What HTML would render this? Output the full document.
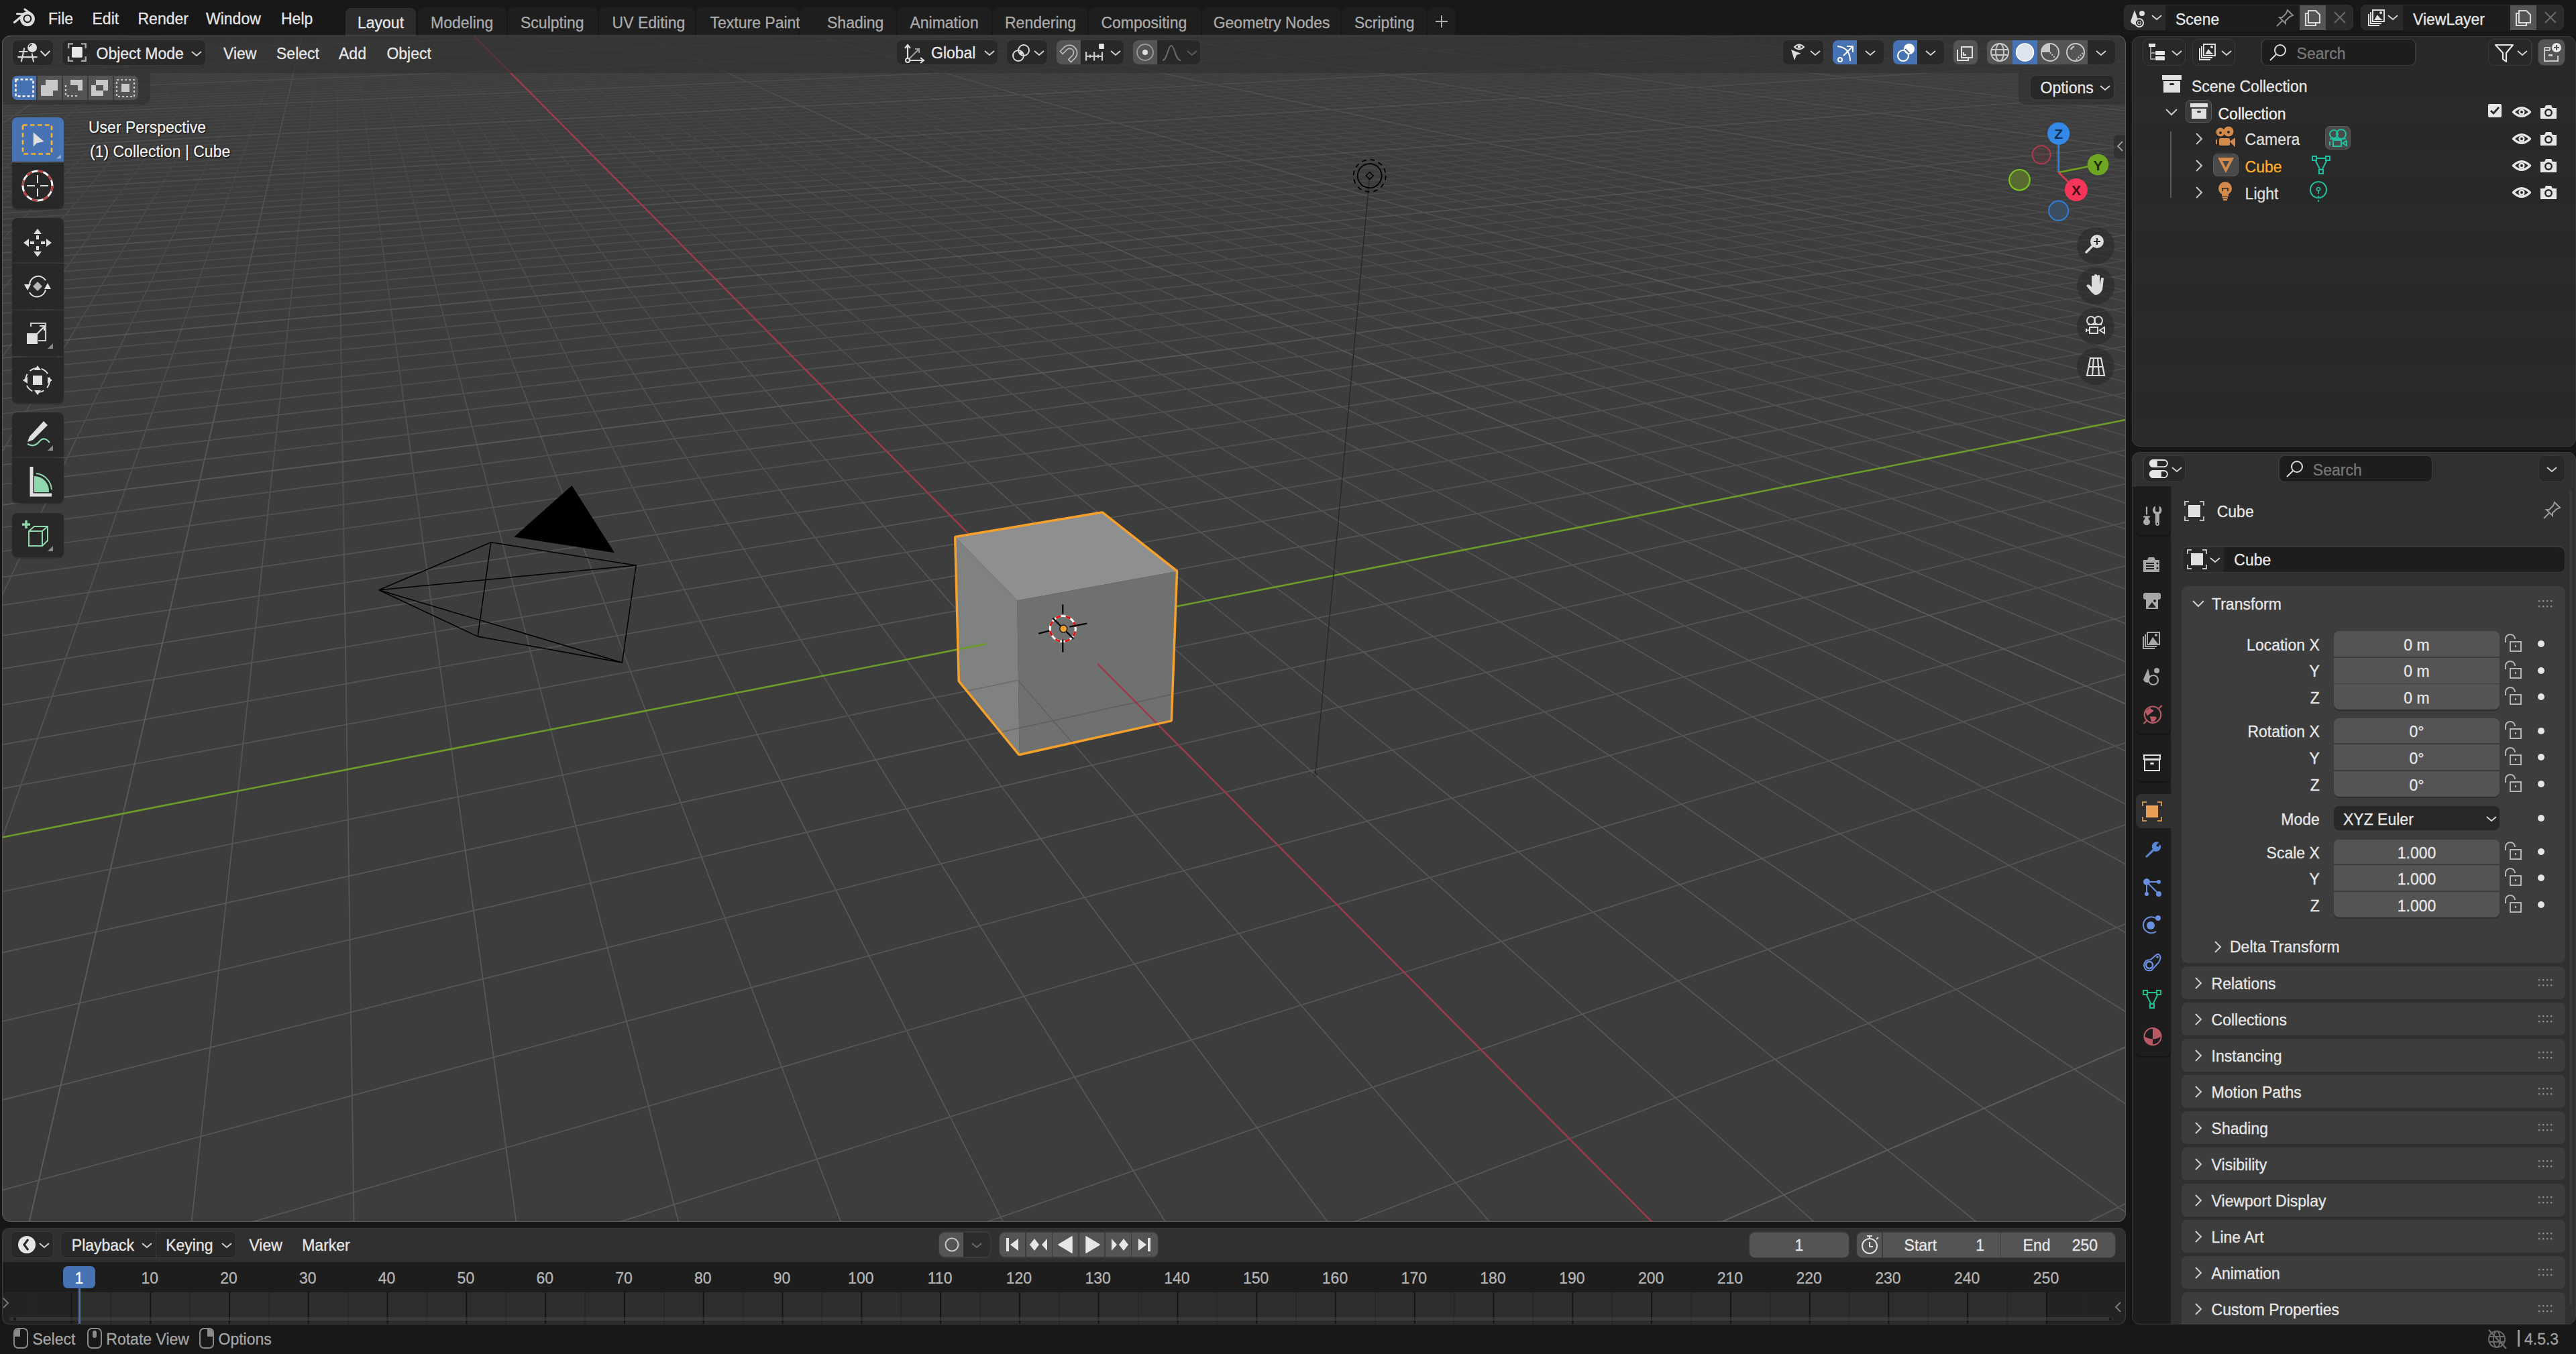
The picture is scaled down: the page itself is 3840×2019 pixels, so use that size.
<!DOCTYPE html>
<html><head><meta charset="utf-8"><style>
html,body{margin:0;padding:0}
body{width:3840px;height:2019px;background:#161616;position:relative;overflow:hidden;font-family:"Liberation Sans",sans-serif;font-size:23px;color:#e6e6e6}
.a{position:absolute}
.t{position:absolute;white-space:nowrap;line-height:1;-webkit-text-stroke:0.3px currentColor}
svg.a{overflow:visible}
</style></head><body>
<svg width="3840" height="2019" viewBox="0 0 3840 2019" style="position:absolute;left:0;top:0"><defs><clipPath id="vpclip"><rect x="3" y="53" width="3166" height="1769" rx="12"/></clipPath><clipPath id="cubeclip"><polygon points="1425.5,802.0 1642.8,765.8 1752.8,852.2 1744.6,1073.4 1519.6,1123.6 1431.0,1015.0" fill="#fff" /></clipPath></defs><g clip-path="url(#vpclip)"><rect x="3" y="53" width="3166" height="1769" fill="#3d3d3d"/><g fill="none" stroke="#575757" stroke-width="1.85"><path d="M-56.6 51.2L1303.0 12.5M-61.5 53.0L1344.8 12.6M-38.5 54.0L1386.7 12.8M-43.2 55.9L1428.6 12.9M-48.1 57.8L1488.2 12.6M-53.0 59.7L1530.2 12.7M-58.0 61.7L1572.2 12.9M-38.9 64.8L1673.5 12.7M-43.9 66.8L1715.6 12.8M-49.0 68.9L1757.8 13.0M35.0 68.3L1816.6 12.6M147.3 66.7L1858.9 12.8M229.9 66.1L1901.1 12.9M339.7 64.5L1959.6 12.6M420.9 63.9L2001.9 12.7M501.6 63.3L2044.2 12.9M687.4 61.2L2144.7 12.6M766.3 60.6L2187.1 12.8M844.7 60.0L2229.7 13.0M897.9 60.2L2287.3 12.6M975.8 59.6L2329.9 12.7M1053.2 59.0L2372.5 12.9M1130.1 58.4L2429.7 12.5M1183.2 58.6L2472.4 12.7M1259.7 58.1L2515.1 12.8M1388.7 57.7L2614.7 12.6M1441.9 57.9L2657.5 12.8M1495.1 58.2L2700.4 12.9M1570.4 57.6L2715.9 14.1M1623.7 57.8L2731.6 15.3M1677.1 58.1L2747.6 16.6M1730.7 58.3L2763.8 17.8M1784.3 58.5L2780.3 19.1M1838.0 58.8L2797.0 20.3M1945.8 59.3L2831.1 23.0M1999.9 59.5L2848.5 24.3M2054.1 59.8L2866.2 25.7M2108.4 60.0L2884.2 27.0M2162.8 60.2L2902.5 28.4M2217.3 60.5L2921.0 29.9M2271.9 60.7L2939.8 31.3M2326.7 61.0L2958.9 32.8M2381.5 61.2L2978.3 34.3M2473.0 62.6L3018.1 37.3M2528.4 62.8L3038.5 38.9M2565.5 64.0L3059.2 40.4M2621.4 64.2L3080.2 42.1M2677.3 64.5L3101.6 43.7M2733.4 64.7L3123.3 45.4M2771.9 65.9L3145.4 47.1M2828.4 66.1L3167.9 48.8M2867.7 67.3L3190.8 50.5M2981.8 67.8L3222.7 54.9M3022.1 69.0L3216.1 58.5M3079.7 69.2L3209.4 62.1M3120.7 70.4L3218.3 65.0M3178.8 70.7L3211.4 68.8M-29.2 50.4L-38.5 54.0M-2.1 49.6L-38.9 64.8M24.9 48.9L-19.3 68.0M51.7 48.1L5.5 69.2M78.2 47.4L35.0 68.3M104.6 46.6L64.3 67.4M130.8 45.9L93.3 66.5M156.8 45.1L118.5 67.6M182.5 44.4L147.3 66.7M233.5 42.9L201.5 67.0M258.8 42.2L229.9 66.1M283.8 41.5L258.1 65.2M308.7 40.8L286.0 64.3M333.3 40.1L312.0 65.4M357.8 39.4L339.7 64.5M382.2 38.7L367.3 63.7M406.3 38.0L393.6 64.8M430.3 37.3L420.9 63.9M477.7 36.0L474.7 64.2M501.2 35.3L501.6 63.3M524.5 34.6L528.3 62.4M547.6 34.0L555.3 63.5M570.6 33.3L581.8 62.7M593.4 32.7L608.1 61.8M616.1 32.0L634.2 60.9M638.6 31.4L661.5 62.0M661.0 30.8L687.4 61.2M705.2 29.5L740.8 61.4M727.1 28.9L766.3 60.6M748.8 28.3L791.6 59.7M770.4 27.6L819.6 60.8M791.9 27.0L844.7 60.0M813.2 26.4L873.0 61.1M834.4 25.8L897.9 60.2M855.4 25.2L922.6 59.4M876.3 24.6L951.2 60.5M917.6 23.5L1000.1 58.8M938.1 22.9L1029.0 59.8M958.4 22.3L1053.2 59.0M978.7 21.7L1077.2 58.2M998.7 21.1L1106.4 59.2M1018.7 20.6L1130.1 58.4M1038.5 20.0L1159.6 59.5M1058.2 19.5L1183.2 58.6M1077.7 18.9L1206.7 57.8M1116.5 17.8L1259.7 58.1M1135.7 17.3L1289.7 59.1M1154.7 16.7L1312.8 58.3M1173.7 16.2L1335.7 57.5M1192.5 15.6L1366.0 58.5M1211.2 15.1L1388.7 57.7M1229.8 14.6L1419.4 58.8M1248.3 14.0L1441.9 57.9M1266.6 13.5L1464.2 57.1M1303.0 12.5L1517.3 57.3M1321.0 12.0L1548.5 58.4M1344.8 12.6L1570.4 57.6M1362.7 12.1L1602.0 58.7M1386.7 12.8L1623.7 57.8M1404.5 12.3L1655.6 58.9M1428.6 12.9L1677.1 58.1M1446.3 12.4L1698.5 57.2M1463.9 11.9L1730.7 58.3M1505.7 12.1L1784.3 58.5M1530.2 12.7L1805.3 57.7M1547.5 12.2L1838.0 58.8M1572.2 12.9L1858.9 57.9M1589.5 12.4L1891.9 59.0M1606.6 11.9L1912.5 58.2M1631.5 12.5L1945.8 59.3M1648.4 12.0L1966.3 58.4M1673.5 12.7L1999.9 59.5M1715.6 12.8L2054.1 59.8M1732.4 12.3L2074.1 58.9M1757.8 13.0L2108.4 60.0M1774.5 12.5L2128.2 59.2M1791.0 12.0L2162.8 60.2M1816.6 12.6L2182.4 59.4M1833.1 12.1L2217.3 60.5M1858.9 12.8L2252.5 61.6M1875.2 12.3L2271.9 60.7M1917.3 12.4L2326.7 61.0M1933.4 11.9L2362.5 62.1M1959.6 12.6L2381.5 61.2M1975.5 12.0L2417.7 62.3M2001.9 12.7L2436.5 61.5M2017.7 12.2L2473.0 62.6M2044.2 12.9L2509.8 63.7M2060.0 12.3L2528.4 62.8M2075.6 11.8L2565.5 64.0M2117.8 12.0L2621.4 64.2M2144.7 12.6L2639.5 63.3M2160.1 12.1L2677.3 64.5M2187.1 12.8L2715.5 65.6M2202.4 12.3L2733.4 64.7M2229.7 13.0L2771.9 65.9M2244.8 12.4L2789.6 65.0M2259.9 11.9L2828.4 66.1M2287.3 12.6L2867.7 67.3M2329.9 12.7L2924.7 67.5M2344.7 12.2L2964.6 68.7M2372.5 12.9L2981.8 67.8M2387.2 12.4L3022.1 69.0M2401.8 11.9L3039.0 68.1M2429.7 12.5L3079.7 69.2M2444.2 12.0L3120.7 70.4M2472.4 12.7L3137.3 69.5M2486.8 12.2L3178.8 70.7M2529.3 12.3L3211.4 68.8M2557.9 13.0L3227.5 67.9M2572.0 12.5L3218.3 65.0M2586.0 12.0L3209.4 62.1M2614.7 12.6L3225.0 61.2M2628.6 12.1L3216.1 58.5M2657.5 12.8L3231.5 57.6M2671.3 12.3L3222.7 54.9M2700.4 12.9L3214.1 52.3" stroke-opacity="0.1"/><path d="M-54.2 71.1L35.0 68.3M-59.5 73.2L147.3 66.7M-64.9 75.4L229.9 66.1M-39.4 76.7L339.7 64.5M-44.7 79.0L420.9 63.9M-50.1 81.3L501.6 63.3M-61.2 86.1L687.4 61.2M-66.9 88.6L766.3 60.6M-40.0 90.0L844.7 60.0M-45.6 92.5L897.9 60.2M-51.3 95.1L975.8 59.6M-57.1 97.8L1053.2 59.0M-63.1 100.5L1130.1 58.4M-69.1 103.3L1183.2 58.6M-40.6 104.9L1259.7 58.1M-52.6 110.7L1388.7 57.7M-58.8 113.7L1441.9 57.9M-65.2 116.8L1495.1 58.2M-71.7 119.9L1570.4 57.6M-41.3 121.7L1623.7 57.8M-47.7 124.9L1677.1 58.1M-54.1 128.3L1730.7 58.3M-60.8 131.7L1784.3 58.5M-67.6 135.2L1838.0 58.8M-42.2 140.8L1945.8 59.3M-48.9 144.5L1999.9 59.5M63.2 143.3L2054.1 59.8M250.1 139.0L2108.4 60.0M395.4 136.2L2162.8 60.2M538.1 133.6L2217.3 60.5M643.7 132.5L2271.9 60.7M782.2 129.9L2326.7 61.0M885.6 128.8L2381.5 61.2M1089.9 126.7L2473.0 62.6M1190.9 125.7L2528.4 62.8M1260.7 126.1L2565.5 64.0M1360.8 125.0L2621.4 64.2M1430.7 125.4L2677.3 64.5M1529.9 124.4L2733.4 64.7M1599.9 124.8L2771.9 65.9M1670.1 125.2L2828.4 66.1M1740.4 125.6L2867.7 67.3M1881.7 126.4L2981.8 67.8M1952.6 126.8L3022.1 69.0M2023.7 127.3L3079.7 69.2M2095.1 127.7L3120.7 70.4M2166.6 128.1L3178.8 70.7M2238.3 128.5L3220.7 71.9M2284.8 130.4L3213.6 76.0M2357.2 130.8L3223.2 79.3M2429.9 131.2L3215.9 83.6M2551.5 133.6L3218.3 91.8M2625.1 134.0L3210.6 96.7M2675.1 136.0L3221.0 100.6M2749.5 136.4L3213.0 105.8M2800.7 138.5L3223.8 109.9M2875.9 138.9L3215.5 115.6M2928.5 140.9L3226.8 120.0M2981.8 143.0L3218.3 126.1M3058.3 143.5L3209.4 132.5M3190.4 146.0L3212.2 144.4M-19.3 68.0L-39.4 76.7M5.5 69.2L-40.0 90.0M35.0 68.3L-40.6 104.9M64.3 67.4L-41.3 121.7M93.3 66.5L-42.2 140.8M118.5 67.6L-15.7 146.7M147.3 66.7L23.9 145.0M201.5 67.0L102.0 141.7M229.9 66.1L140.4 140.1M258.1 65.2L174.4 142.2M286.0 64.3L212.5 140.6M312.0 65.4L250.1 139.0M339.7 64.5L287.4 137.4M367.3 63.7L322.0 139.4M393.6 64.8L358.9 137.8M420.9 63.9L395.4 136.2M474.7 64.2L466.9 136.7M501.6 63.3L502.7 135.1M528.3 62.4L538.1 133.6M555.3 63.5L573.1 132.1M581.8 62.7L609.0 134.0M608.1 61.8L643.7 132.5M634.2 60.9L678.1 131.0M661.5 62.0L712.0 129.5M687.4 61.2L748.6 131.4M740.8 61.4L815.5 128.4M766.3 60.6L852.6 130.3M791.6 59.7L885.6 128.8M819.6 60.8L918.2 127.4M844.7 60.0L955.8 129.2M873.0 61.1L988.1 127.8M897.9 60.2L1020.1 126.3M922.6 59.4L1058.3 128.2M951.2 60.5L1089.9 126.7M1000.1 58.8L1159.9 127.1M1029.0 59.8L1190.9 125.7M1053.2 59.0L1221.5 124.2M1077.2 58.2L1260.7 126.1M1106.4 59.2L1291.1 124.6M1130.1 58.4L1330.8 126.5M1159.6 59.5L1360.8 125.0M1183.2 58.6L1390.5 123.6M1206.7 57.8L1430.7 125.4M1259.7 58.1L1500.8 125.8M1289.7 59.1L1529.9 124.4M1312.8 58.3L1571.1 126.3M1335.7 57.5L1599.9 124.8M1366.0 58.5L1628.3 123.4M1388.7 57.7L1670.1 125.2M1419.4 58.8L1698.2 123.8M1441.9 57.9L1740.4 125.6M1464.2 57.1L1768.2 124.2M1517.3 57.3L1838.4 124.6M1548.5 58.4L1881.7 126.4M1570.4 57.6L1908.8 125.0M1602.0 58.7L1952.6 126.8M1623.7 57.8L1979.4 125.4M1655.6 58.9L2023.7 127.3M1677.1 58.1L2050.2 125.8M1698.5 57.2L2095.1 127.7M1730.7 58.3L2140.5 129.6M1784.3 58.5L2212.5 130.0M1805.3 57.7L2238.3 128.5M1838.0 58.8L2284.8 130.4M1858.9 57.9L2310.2 128.9M1891.9 59.0L2357.2 130.8M1912.5 58.2L2404.9 132.8M1945.8 59.3L2429.9 131.2M1966.3 58.4L2478.1 133.2M1999.9 59.5L2502.7 131.7M2054.1 59.8L2600.9 135.6M2074.1 58.9L2625.1 134.0M2108.4 60.0L2675.1 136.0M2128.2 59.2L2725.8 138.0M2162.8 60.2L2749.5 136.4M2182.4 59.4L2800.7 138.5M2217.3 60.5L2852.7 140.5M2252.5 61.6L2875.9 138.9M2271.9 60.7L2928.5 140.9M2326.7 61.0L3004.4 141.4M2362.5 62.1L3058.3 143.5M2381.5 61.2L3113.0 145.6M2417.7 62.3L3168.4 147.7M2436.5 61.5L3190.4 146.0M2473.0 62.6L3212.2 144.4M2509.8 63.7L3233.7 142.8M2528.4 62.8L3221.3 137.5M2565.5 64.0L3209.4 132.5M2621.4 64.2L3218.3 126.1M2639.5 63.3L3238.5 124.7M2677.3 64.5L3226.8 120.0M2715.5 65.6L3215.5 115.6M2733.4 64.7L3235.0 114.2M2771.9 65.9L3223.8 109.9M2789.6 65.0L3213.0 105.8M2828.4 66.1L3231.7 104.5M2867.7 67.3L3221.0 100.6M2924.7 67.5L3228.7 95.5M2964.6 68.7L3218.3 91.8M2981.8 67.8L3236.1 90.7M3022.1 69.0L3225.8 87.1M3039.0 68.1L3215.9 83.6M3079.7 69.2L3233.0 82.6M3120.7 70.4L3223.2 79.3M3137.3 69.5L3213.6 76.0M3178.8 70.7L3230.2 75.0" stroke-opacity="0.19"/><path d="M-55.9 148.3L63.2 143.3M-63.0 152.3L250.1 139.0M-70.3 156.3L395.4 136.2M-77.8 160.4L538.1 133.6M-43.1 162.8L643.7 132.5M-50.4 167.0L782.2 129.9M-57.9 171.5L885.6 128.8M-73.5 180.7L1089.9 126.7M-81.6 185.4L1190.9 125.7M-44.2 188.2L1260.7 126.1M-52.1 193.2L1360.8 125.0M-60.2 198.4L1430.7 125.4M-68.6 203.7L1529.9 124.4M-77.2 209.2L1599.9 124.8M-37.1 212.3L1670.1 125.2M-45.4 218.1L1740.4 125.6M136.4 219.5L1881.7 126.4M368.6 212.6L1952.6 126.8M592.2 205.9L2023.7 127.3M766.2 201.8L2095.1 127.7M895.5 200.1L2166.6 128.1M1023.6 198.5L2238.3 128.5M1150.4 196.8L2284.8 130.4M1276.1 195.2L2357.2 130.8M1400.5 193.6L2429.9 131.2M1575.0 194.8L2551.5 133.6M1697.8 193.2L2625.1 134.0M1785.3 193.8L2675.1 136.0M1873.0 194.4L2749.5 136.4M1961.1 195.1L2800.7 138.5M2016.3 198.0L2875.9 138.9M2105.5 198.6L2928.5 140.9M2195.0 199.2L2981.8 143.0M2284.8 199.9L3058.3 143.5M2434.4 203.5L3190.4 146.0M2494.9 206.5L3224.6 149.9M2587.0 207.2L3215.1 157.4M2649.5 210.3L3228.2 163.3M2742.8 211.0L3218.3 171.5M2807.3 214.1L3232.1 178.0M2872.8 217.4L3221.9 187.0M2968.3 218.1L3211.1 196.4M3036.0 221.4L3225.7 204.0M3202.6 225.4L3230.0 222.8M-15.7 146.7L-43.1 162.8M23.9 145.0L-44.2 188.2M102.0 141.7L-12.1 227.4M140.4 140.1L38.1 224.7M174.4 142.2L87.6 222.1M212.5 140.6L136.4 219.5M250.1 139.0L184.5 216.9M287.4 137.4L232.0 214.4M322.0 139.4L275.3 217.6M358.9 137.8L322.3 215.1M395.4 136.2L368.6 212.6M466.9 136.7L459.3 207.7M502.7 135.1L503.8 210.8M538.1 133.6L548.3 208.3M573.1 132.1L592.2 205.9M609.0 134.0L635.6 203.5M643.7 132.5L681.1 206.6M678.1 131.0L723.9 204.2M712.0 129.5L766.2 201.8M748.6 131.4L807.9 199.5M815.5 128.4L895.5 200.1M852.6 130.3L936.2 197.8M885.6 128.8L983.4 200.8M918.2 127.4L1023.6 198.5M955.8 129.2L1063.2 196.2M988.1 127.8L1111.3 199.1M1020.1 126.3L1150.4 196.8M1058.3 128.2L1189.1 194.6M1089.9 126.7L1237.9 197.5M1159.9 127.1L1313.7 192.9M1190.9 125.7L1363.4 195.8M1221.5 124.2L1400.5 193.6M1260.7 126.1L1451.0 196.4M1291.1 124.6L1487.6 194.2M1330.8 126.5L1523.8 192.0M1360.8 125.0L1575.0 194.8M1390.5 123.6L1610.6 192.6M1430.7 125.4L1662.6 195.4M1500.8 125.8L1750.6 196.1M1529.9 124.4L1785.3 193.8M1571.1 126.3L1838.9 196.7M1599.9 124.8L1873.0 194.4M1628.3 123.4L1927.5 197.3M1670.1 125.2L1961.1 195.1M1698.2 123.8L2016.3 198.0M1740.4 125.6L2049.4 195.7M1768.2 124.2L2105.5 198.6M1838.4 124.6L2195.0 199.2M1881.7 126.4L2252.8 202.2M1908.8 125.0L2284.8 199.9M1952.6 126.8L2343.4 202.8M1979.4 125.4L2374.8 200.5M2023.7 127.3L2434.4 203.5M2050.2 125.8L2494.9 206.5M2095.1 127.7L2525.6 204.1M2140.5 129.6L2587.0 207.2M2212.5 130.0L2713.0 213.5M2238.3 128.5L2742.8 211.0M2284.8 130.4L2807.3 214.1M2310.2 128.9L2872.8 217.4M2357.2 130.8L2901.8 214.8M2404.9 132.8L2968.3 218.1M2429.9 131.2L3036.0 221.4M2478.1 133.2L3104.8 224.7M2502.7 131.7L3174.9 228.1M2600.9 135.6L3230.0 222.8M2625.1 134.0L3214.5 214.4M2675.1 136.0L3241.0 211.9M2725.8 138.0L3225.7 204.0M2749.5 136.4L3211.1 196.4M2800.7 138.5L3236.3 194.2M2852.7 140.5L3221.9 187.0M2875.9 138.9L3246.4 184.8M2928.5 140.9L3232.1 178.0M3004.4 141.4L3241.7 169.6M3058.3 143.5L3228.2 163.3M3113.0 145.6L3215.1 157.4M3168.4 147.7L3237.5 155.6M3190.4 146.0L3224.6 149.9" stroke-opacity="0.28"/><path d="M-62.9 230.1L136.4 219.5M-72.1 236.4L368.6 212.6M-81.6 243.0L592.2 205.9M-37.8 246.7L766.2 201.8M-46.9 253.6L895.5 200.1M-56.4 260.7L1023.6 198.5M-66.2 268.1L1150.4 196.8M-76.4 275.7L1276.1 195.2M-86.9 283.6L1400.5 193.6M-48.8 296.6L1575.0 194.8M-59.3 305.3L1697.8 193.2M52.6 306.3L1785.3 193.8M395.3 292.2L1873.0 194.4M665.7 282.4L1961.1 195.1M874.8 276.4L2016.3 198.0M1030.3 273.9L2105.5 198.6M1230.4 268.1L2195.0 199.2M1335.8 269.0L2284.8 199.9M1591.5 267.5L2434.4 203.5M1697.4 268.4L2494.9 206.5M1803.8 269.4L2587.0 207.2M1910.6 270.3L2649.5 210.3M2017.9 271.2L2742.8 211.0M2125.5 272.1L2807.3 214.1M2194.7 276.4L2872.8 217.4M2304.1 277.4L2968.3 218.1M2413.9 278.3L3036.0 221.4M2561.5 287.3L3202.6 225.4M2674.4 288.3L3218.3 234.4M2751.9 292.9L3234.8 243.7M2831.0 297.7L3222.6 256.6M2947.1 298.7L3209.6 270.3M3029.3 303.6L3227.3 281.5M3113.2 308.5L3213.7 297.0M3199.0 313.6L3232.7 309.6M-12.1 227.4L-37.8 246.7M38.1 224.7L-38.6 288.2M87.6 222.1L-8.3 310.3M136.4 219.5L52.6 306.3M184.5 216.9L112.5 302.5M232.0 214.4L171.3 298.6M275.3 217.6L229.2 294.9M322.3 215.1L282.1 299.7M368.6 212.6L339.2 295.9M459.3 207.7L450.6 288.5M503.8 210.8L504.9 284.9M548.3 208.3L559.4 289.5M592.2 205.9L613.0 285.9M635.6 203.5L665.7 282.4M681.1 206.6L717.5 278.9M723.9 204.2L768.5 275.4M766.2 201.8L824.6 279.8M807.9 199.5L874.8 276.4M895.5 200.1L981.6 277.3M936.2 197.8L1030.3 273.9M983.4 200.8L1078.3 270.5M1023.6 198.5L1125.5 267.2M1063.2 196.2L1183.9 271.5M1111.3 199.1L1230.4 268.1M1150.4 196.8L1290.1 272.4M1189.1 194.6L1335.8 269.0M1237.9 197.5L1380.9 265.8M1313.7 192.9L1485.9 266.6M1363.4 195.8L1547.9 270.9M1400.5 193.6L1591.5 267.5M1451.0 196.4L1634.4 264.3M1487.6 194.2L1697.4 268.4M1523.8 192.0L1739.6 265.2M1575.0 194.8L1803.8 269.4M1610.6 192.6L1845.2 266.1M1662.6 195.4L1910.6 270.3M1750.6 196.1L2017.9 271.2M1785.3 193.8L2085.8 275.5M1838.9 196.7L2125.5 272.1M1873.0 194.4L2194.7 276.4M1927.5 197.3L2233.7 273.0M1961.1 195.1L2304.1 277.4M2016.3 198.0L2375.9 281.8M2049.4 195.7L2413.9 278.3M2105.5 198.6L2487.0 282.7M2195.0 199.2L2598.5 283.7M2252.8 202.2L2674.4 288.3M2284.8 199.9L2751.9 292.9M2343.4 202.8L2831.0 297.7M2374.8 200.5L2911.8 302.5M2434.4 203.5L2947.1 298.7M2494.9 206.5L3029.3 303.6M2525.6 204.1L3113.2 308.5M2587.0 207.2L3199.0 313.6M2713.0 213.5L3213.7 297.0M2742.8 211.0L3246.1 293.3M2807.3 214.1L3227.3 281.5M2872.8 217.4L3209.6 270.3M2901.8 214.8L3240.1 267.0M2968.3 218.1L3222.6 256.6M3036.0 221.4L3252.0 253.5M3104.8 224.7L3234.8 243.7M3174.9 228.1L3218.3 234.4" stroke-opacity="0.38"/><path d="M-70.2 314.3L52.6 306.3M-81.6 323.7L395.3 292.2M-93.4 333.5L665.7 282.4M-39.7 339.2L874.8 276.4M-51.0 349.6L1030.3 273.9M-62.8 360.5L1230.4 268.1M-75.2 371.9L1335.8 269.0M-101.6 396.2L1591.5 267.5M-41.0 403.4L1697.4 268.4M441.0 377.5L1803.8 269.4M760.2 363.6L1910.6 270.3M1006.0 355.2L2017.9 271.2M1188.7 351.7L2125.5 272.1M1368.9 348.3L2194.7 276.4M1546.6 345.0L2304.1 277.4M1671.9 346.2L2413.9 278.3M1924.2 348.7L2561.5 287.3M2051.3 350.0L2674.4 288.3M2132.3 356.0L2751.9 292.9M2261.8 357.4L2831.0 297.7M2346.5 363.6L2947.1 298.7M2478.4 364.9L3029.3 303.6M2567.0 371.3L3113.2 308.5M2657.9 377.9L3199.0 313.6M2794.2 379.3L3218.3 327.2M2986.7 393.0L3223.7 361.8M3086.7 400.1L3245.8 378.3M3189.4 407.4L3229.8 401.6M-8.3 310.3L-39.7 339.2M52.6 306.3L-41.0 403.4M112.5 302.5L32.3 397.7M171.3 298.6L104.1 392.2M229.2 294.9L174.4 386.7M282.1 299.7L237.5 393.7M339.2 295.9L306.7 388.2M450.6 288.5L441.0 377.5M504.9 284.9L506.2 372.3M559.4 289.5L570.1 367.3M613.0 285.9L632.8 362.3M665.7 282.4L698.6 368.6M717.5 278.9L760.2 363.6M768.5 275.4L820.7 358.7M824.6 279.8L880.0 353.9M874.8 276.4L947.7 360.0M981.6 277.3L1063.1 350.5M1030.3 273.9L1132.5 356.5M1078.3 270.5L1188.7 351.7M1125.5 267.2L1243.8 347.1M1183.9 271.5L1314.8 353.0M1230.4 268.1L1368.9 348.3M1290.1 272.4L1421.9 343.7M1335.8 269.0L1494.6 349.6M1380.9 265.8L1546.6 345.0M1485.9 266.6L1671.9 346.2M1547.9 270.9L1747.8 352.2M1591.5 267.5L1797.7 347.5M1634.4 264.3L1875.4 353.4M1697.4 268.4L1924.2 348.7M1739.6 265.2L2003.5 354.7M1803.8 269.4L2051.3 350.0M1845.2 266.1L2132.3 356.0M1910.6 270.3L2179.1 351.3M2017.9 271.2L2346.5 363.6M2085.8 275.5L2391.9 358.7M2125.5 272.1L2478.4 364.9M2194.7 276.4L2567.0 371.3M2233.7 273.0L2657.9 377.9M2304.1 277.4L2701.4 372.7M2375.9 281.8L2794.2 379.3M2413.9 278.3L2889.2 386.1M2487.0 282.7L2986.7 393.0M2598.5 283.7L3189.4 407.4M2674.4 288.3L3229.8 401.6M2751.9 292.9L3269.5 396.0M2831.0 297.7L3245.8 378.3M2911.8 302.5L3223.7 361.8M2947.1 298.7L3260.5 356.9M3029.3 303.6L3238.8 341.6M3113.2 308.5L3218.3 327.2M3199.0 313.6L3252.8 323.0" stroke-opacity="0.48"/><path d="M-53.8 416.8L441.0 377.5M-67.4 430.8L760.2 363.6M-81.6 445.5L1006.0 355.2M-96.5 461.0L1188.7 351.7M-112.2 477.3L1368.9 348.3M-42.7 486.8L1546.6 345.0M-57.6 504.5L1671.9 346.2M877.6 449.7L1924.2 348.7M1161.0 438.2L2051.3 350.0M1371.9 433.5L2132.3 356.0M1519.0 435.3L2261.8 357.4M1666.8 437.0L2346.5 363.6M1815.5 438.8L2478.4 364.9M1965.1 440.5L2567.0 371.3M2115.5 442.3L2657.9 377.9M2212.4 450.8L2794.2 379.3M2468.4 461.3L2986.7 393.0M2625.5 463.2L3086.7 400.1M2733.3 472.3L3189.4 407.4M2844.2 481.6L3212.3 427.1M2958.5 491.2L3237.0 448.2M3076.3 501.1L3218.3 478.2M3197.7 511.3L3245.5 503.3M32.3 397.7L-42.7 486.8M104.1 392.2L29.0 496.6M174.4 386.7L113.4 488.8M237.5 393.7L187.7 498.7M306.7 388.2L270.5 490.9M441.0 377.5L430.4 475.9M506.2 372.3L507.6 468.6M570.1 367.3L583.0 461.5M632.8 362.3L656.8 454.6M698.6 368.6L734.8 463.4M760.2 363.6L807.0 456.5M820.7 358.7L877.6 449.7M880.0 353.9L946.7 443.0M947.7 360.0L1027.3 451.5M1063.1 350.5L1161.0 438.2M1132.5 356.5L1225.7 431.8M1188.7 351.7L1308.7 440.0M1243.8 347.1L1371.9 433.5M1314.8 353.0L1457.1 441.8M1368.9 348.3L1519.0 435.3M1421.9 343.7L1579.4 428.9M1494.6 349.6L1666.8 437.0M1546.6 345.0L1725.9 430.6M1671.9 346.2L1873.2 432.3M1747.8 352.2L1965.1 440.5M1797.7 347.5L2059.6 448.9M1875.4 353.4L2115.5 442.3M1924.2 348.7L2212.4 450.8M2003.5 354.7L2266.8 444.1M2051.3 350.0L2366.2 452.6M2132.3 356.0L2468.4 461.3M2179.1 351.3L2573.5 470.3M2346.5 363.6L2733.3 472.3M2391.9 358.7L2844.2 481.6M2478.4 364.9L2958.5 491.2M2567.0 371.3L3076.3 501.1M2657.9 377.9L3197.7 511.3M2701.4 372.7L3245.5 503.3M2794.2 379.3L3218.3 478.2M2889.2 386.1L3263.5 470.9M2986.7 393.0L3237.0 448.2M3189.4 407.4L3254.0 420.9" stroke-opacity="0.57"/><path d="M-90.0 543.0L877.6 449.7M-107.6 564.0L1161.0 438.2M-126.4 586.2L1371.9 433.5M-44.9 599.3L1519.0 435.3M-62.6 623.9L1666.8 437.0M-81.5 650.1L1815.5 438.8M-101.6 678.1L8.0 665.5M1025.7 548.5L1965.1 440.5M1351.0 533.1L2115.5 442.3M1522.9 535.4L2212.4 450.8M1870.1 540.2L2468.4 461.3M2045.5 542.6L2625.5 463.2M2222.0 545.0L2733.3 472.3M2337.7 556.7L2844.2 481.6M2457.2 568.7L2958.5 491.2M2580.8 581.1L3076.3 501.1M2708.7 594.0L3197.7 511.3M2841.1 607.3L3225.5 539.2M2918.0 632.4L3255.7 569.4M29.0 496.6L-44.9 599.3M113.4 488.8L8.0 665.5M187.7 498.7L114.3 653.3M270.5 490.9L226.5 615.8M430.4 475.9L417.7 594.5M507.6 468.6L509.3 584.3M583.0 461.5L598.5 574.3M656.8 454.6L685.3 564.7M734.8 463.4L769.8 555.3M807.0 456.5L852.2 546.1M877.6 449.7L945.3 557.8M946.7 443.0L1025.7 548.5M1027.3 451.5L1104.0 539.5M1161.0 438.2L1276.7 541.9M1225.7 431.8L1351.0 533.1M1308.7 440.0L1450.5 544.3M1371.9 433.5L1522.9 535.4M1457.1 441.8L1593.5 526.8M1519.0 435.3L1696.0 537.8M1579.4 428.9L1764.6 529.1M1666.8 437.0L1870.1 540.2M1725.9 430.6L1936.8 531.4M1873.2 432.3L2157.8 554.2M1965.1 440.5L2222.0 545.0M2059.6 448.9L2337.7 556.7M2115.5 442.3L2457.2 568.7M2212.4 450.8L2580.8 581.1M2266.8 444.1L2708.7 594.0M2366.2 452.6L2841.1 607.3M2468.4 461.3L3061.2 647.1M2573.5 470.3L3209.9 662.4M2733.3 472.3L3234.2 613.1M2844.2 481.6L3288.6 602.4M2958.5 491.2L3255.7 569.4M3076.3 501.1L3225.5 539.2M3197.7 511.3L3274.9 530.4" stroke-opacity="0.66"/><path d="M8.0 665.5L1025.7 548.5M-123.3 708.2L1351.0 533.1M-146.5 740.5L1522.9 535.4M-69.9 796.0L1870.1 540.2M-93.4 835.3L2045.5 542.6M-118.9 878.1L2222.0 545.0M-146.7 924.7L263.9 863.8M1062.9 745.5L2337.7 556.7M1475.6 720.3L2457.2 568.7M1695.0 724.1L2580.8 581.1M1916.1 727.9L2708.7 594.0M2056.2 746.5L2841.1 607.3M2202.2 765.9L2918.0 632.4M2513.9 807.2L3209.9 662.4M2680.5 829.3L3244.9 704.7M2854.8 852.4L3218.3 766.9M2958.2 896.6L3258.6 821.0M3151.7 923.1L3229.2 902.1M8.0 665.5L-48.2 759.6M114.3 653.3L-27.7 952.6M226.5 615.8L132.3 883.3M417.7 594.5L390.7 845.1M509.3 584.3L512.9 827.0M598.5 574.3L630.7 809.5M685.3 564.7L744.5 792.7M769.8 555.3L854.3 776.4M852.2 546.1L960.3 760.7M945.3 557.8L1062.9 745.5M1025.7 548.5L1162.1 730.8M1104.0 539.5L1286.8 749.5M1276.7 541.9L1475.6 720.3M1351.0 533.1L1605.3 738.6M1450.5 544.3L1695.0 724.1M1522.9 535.4L1829.8 742.5M1593.5 526.8L1916.1 727.9M1696.0 537.8L2056.2 746.5M1764.6 529.1L2202.2 765.9M1870.1 540.2L2354.7 786.1M1936.8 531.4L2513.9 807.2M2157.8 554.2L2854.8 852.4M2222.0 545.0L3151.7 923.1M2337.7 556.7L3229.2 902.1M2457.2 568.7L3303.9 881.9M2580.8 581.1L3258.6 821.0M2708.7 594.0L3218.3 766.9M2841.1 607.3L3283.8 751.5M3061.2 647.1L3244.9 704.7" stroke-opacity="0.76"/><path d="M263.9 863.8L1062.9 745.5M-177.2 975.7L1475.6 720.3M-53.2 1006.3L1695.0 724.1M-81.3 1065.5L1916.1 727.9M-112.4 1131.0L2056.2 746.5M-147.1 1204.0L2202.2 765.9M-229.6 1378.0L2513.9 807.2M1440.8 1103.0L2680.5 829.3M1756.3 1110.8L2854.8 852.4M2075.7 1118.7L2958.2 896.6M2284.4 1157.7L3151.7 923.1M2506.3 1199.1L3276.5 973.8M2742.7 1243.2L3243.9 1083.7M2881.6 1329.8L3301.1 1183.4M3154.9 1383.0L3264.6 1340.6M-27.7 952.6L-53.2 1006.3M132.3 883.3L-61.9 1434.8M390.7 845.1L346.3 1258.2M512.9 827.0L518.8 1222.3M630.7 809.5L682.7 1188.2M744.5 792.7L838.7 1155.8M854.3 776.4L987.3 1124.8M960.3 760.7L1129.0 1095.3M1062.9 745.5L1305.5 1132.9M1162.1 730.8L1440.8 1103.0M1286.8 749.5L1569.9 1074.5M1475.6 720.3L1954.0 1149.3M1605.3 738.6L2075.7 1118.7M1695.0 724.1L2284.4 1157.7M1829.8 742.5L2506.3 1199.1M1916.1 727.9L2881.6 1329.8M2056.2 746.5L3336.9 1488.4M2202.2 765.9L3264.6 1340.6M2354.7 786.1L3368.4 1300.5M2513.9 807.2L3301.1 1183.4M2854.8 852.4L3330.7 1056.1M3151.7 923.1L3276.5 973.8" stroke-opacity="0.86"/><path d="M-61.9 1434.8L1440.8 1103.0M-101.8 1547.8L1756.3 1110.8M-147.6 1678.1L2075.7 1118.7M-201.1 1830.0L2284.4 1157.7M19.7 1926.3L2506.3 1199.1M776.0 1869.1L2742.7 1243.2M1279.0 1889.1L2881.6 1329.8M1792.0 1909.6L3154.9 1383.0M3009.3 1873.1L3296.2 1732.1M346.3 1258.2L263.1 2032.3M518.8 1222.3L529.5 1947.5M682.7 1188.2L776.0 1869.1M838.7 1155.8L1049.7 1969.2M987.3 1124.8L1279.0 1889.1M1129.0 1095.3L1580.6 1991.3M1305.5 1132.9L1792.0 1909.6M1440.8 1103.0L2122.6 2013.9M1569.9 1074.5L2315.3 1930.5M1954.0 1149.3L2849.1 1951.9M2075.7 1118.7L3009.3 1873.1M2284.4 1157.7L3393.9 1973.6M2506.3 1199.1L3296.2 1732.1M2881.6 1329.8L3218.4 1539.8" stroke-opacity="0.95"/></g><g fill="none" stroke="#5e5e5e" stroke-width="2.0"><path d="M-63.1 63.7L1631.5 12.5M1309.4 38.7L2102.3 12.5M1835.2 39.3L2557.9 13.0M2240.1 44.9L2813.9 21.6M2599.5 54.0L2998.1 35.8M2941.8 66.6L3214.1 52.3M208.1 43.7L172.9 67.9M454.1 36.7L449.4 57.2M897.0 24.0L940.1 43.5M1097.2 18.3L1170.3 39.6M1284.9 13.0L1398.8 37.5M1488.2 12.6L1640.3 38.5M1690.4 12.2L1884.1 39.5M1901.1 12.9L2157.3 43.8M2102.3 12.5L2459.0 50.0M2302.3 12.1L2863.2 64.3M2515.1 12.8L3220.7 71.9" stroke-opacity="0.28"/><path d="M-55.6 83.7L1309.4 38.7M-46.6 107.8L1835.2 39.3M-74.5 138.8L2240.1 44.9M-65.6 176.0L2599.5 54.0M1669.2 133.5L2941.8 66.6M2271.3 145.9L3225.8 87.1M2801.0 168.8L3221.3 137.5M172.9 67.9L-6.1 191.0M449.4 57.2L424.4 165.9M940.1 43.5L1151.8 139.1M1170.3 39.6L1495.0 134.1M1398.8 37.5L1858.9 136.3M1640.3 38.5L2271.3 145.9M1884.1 39.5L2801.0 168.8M2157.3 43.8L3218.3 171.5M2459.0 50.0L3230.1 131.0M2863.2 64.3L3210.6 96.7" stroke-opacity="0.38"/><path d="M-54.0 224.0L1669.2 133.5M-38.6 288.2L2271.3 145.9M1817.0 242.0L2801.0 168.8M2560.8 275.8L3214.5 214.4M-6.1 191.0L-37.1 212.3M424.4 165.9L395.3 292.2M1151.8 139.1L1379.1 241.7M1495.0 134.1L1878.4 245.7M1858.9 136.3L2488.1 271.5M2271.3 145.9L3232.7 309.6M2801.0 168.8L3246.2 231.6" stroke-opacity="0.48"/><path d="M-88.1 383.8L1817.0 242.0M1592.2 366.8L2560.8 275.8M2619.1 420.4L3238.8 341.6M395.3 292.2L362.3 436.0M1379.1 241.7L1645.1 361.8M1878.4 245.7L2382.6 392.5M2488.1 271.5L3212.3 427.1" stroke-opacity="0.57"/><path d="M-73.3 523.2L1592.2 366.8M1831.5 520.6L2619.1 420.4M362.3 436.0L323.4 605.0M1645.1 361.8L2001.8 522.8M2382.6 392.5L3268.1 650.3" stroke-opacity="0.66"/><path d="M-48.2 759.6L1831.5 520.6M323.4 605.0L263.9 863.8M2001.8 522.8L2680.5 829.3" stroke-opacity="0.76"/><path d="M263.9 863.8L143.1 1389.6M2680.5 829.3L3243.9 1083.7" stroke-opacity="0.86"/><path d="M2315.3 1930.5L3218.4 1539.8M143.1 1389.6L19.7 1926.3" stroke-opacity="0.95"/></g><path d="M683.2 30.1 L683.9 30.9 L684.6 31.6 L685.3 32.3 L686.1 33.1 L686.8 33.8 L687.6 34.6 L688.3 35.3 L689.1 36.1 L689.8 36.9 L690.6 37.6 L691.4 38.4 L692.2 39.2 L693.0 40.0 L693.8 40.8 L694.6 41.6 L695.4 42.4 L696.2 43.3 L697.0 44.1 L697.8 44.9 L698.7 45.8 L699.5 46.6 L700.4 47.5 L701.2 48.4 L702.1 49.2 L703.0 50.1 L703.9 51.0 L704.8 51.9 L705.7 52.8 L706.6 53.7 L707.5 54.6 L708.4 55.6 L709.3 56.5 L710.3 57.4 L711.2 58.4 L712.2 59.4 L713.1 60.3 L714.1 61.3 L715.1 62.3 L716.1 63.3 L717.1 64.3 L718.1 65.3 L719.1 66.3 L720.1 67.4 L721.2 68.4 L722.2 69.5 L723.3 70.5 L724.3 71.6 L725.4 72.7 L726.5 73.8 L727.6 74.9 L728.7 76.0 L729.8 77.1 L731.0 78.3 L732.1 79.4 L733.2 80.6 L734.4 81.8 L735.6 82.9 L736.8 84.1 L738.0 85.3 L739.2 86.6 L740.4 87.8 L741.6 89.0 L742.9 90.3 L744.2 91.6 L745.4 92.8 L746.7 94.1 L748.0 95.5 L749.3 96.8 L750.7 98.1 L752.0 99.5 L753.4 100.8 L754.7 102.2 L756.1 103.6 L757.5 105.0 L758.9 106.4 L760.4 107.9 L761.8 109.3 L763.3 110.8 L764.8 112.3 L766.3 113.8 L767.8 115.3 L769.3 116.9 L770.9 118.5 L772.4 120.0 L774.0 121.6 L775.6 123.2 L777.2 124.9 L778.9 126.5 L780.5 128.2 L782.2 129.9 L783.9 131.6 L785.6 133.3 L787.4 135.1 L789.1 136.9 L790.9 138.7 L792.7 140.5 L794.6 142.3 L796.4 144.2 L798.3 146.1 L800.2 148.0 L802.1 149.9 L804.1 151.9 L806.0 153.9 L808.0 155.9 L810.1 157.9 L812.1 160.0 L814.2 162.1 L816.3 164.2 L818.4 166.4 L820.6 168.6 L822.8 170.8 L825.0 173.0 L827.3 175.3 L829.6 177.6 L831.9 179.9 L834.2 182.3 L836.6 184.7 L839.0 187.1 L841.5 189.6 L844.0 192.1 L846.5 194.6 L849.1 197.2 L851.7 199.8 L854.3 202.5 L857.0 205.2 L859.7 207.9 L862.5 210.7 L865.3 213.5 L868.1 216.4 L871.0 219.3 L873.9 222.3 L876.9 225.3 L880.0 228.3 L883.0 231.4 L886.2 234.6 L889.3 237.8 L892.6 241.0 L895.9 244.3 L899.2 247.7 L902.6 251.1 L906.1 254.6 L909.6 258.2 L913.2 261.8 L916.8 265.4 L920.5 269.2 L924.3 273.0 L928.1 276.8 L932.0 280.8 L936.0 284.8 L940.1 288.9 L944.2 293.0 L948.4 297.3 L952.7 301.6 L957.1 306.0 L961.6 310.5 L966.1 315.1 L970.7 319.7 L975.5 324.5 L980.3 329.4 L985.2 334.3 L990.2 339.4 L995.4 344.5 L1000.6 349.8 L1006.0 355.2 L1011.4 360.7 L1017.0 366.3 L1022.7 372.1 L1028.5 378.0 L1034.5 384.0 L1040.6 390.1 L1046.9 396.4 L1053.2 402.8 L1059.8 409.4 L1066.5 416.1 L1073.3 423.0 L1080.3 430.1 L1087.5 437.4 L1094.9 444.8 L1102.5 452.4 L1110.2 460.2 L1118.2 468.2 L1126.4 476.5 L1134.7 484.9 L1143.4 493.6 L1152.2 502.5 L1161.3 511.6 L1170.7 521.1 L1180.3 530.8 L1190.2 540.7 L1200.4 551.0 L1210.9 561.6 L1221.7 572.4 L1232.8 583.7 L1244.3 595.2 L1256.2 607.2 L1268.4 619.5 L1281.1 632.3 L1294.2 645.4 L1307.7 659.0 L1321.7 673.1 L1336.1 687.7 L1351.1 702.8 L1366.7 718.4 L1382.8 734.7 L1399.5 751.5 L1416.9 769.0 L1434.9 787.2 L1453.7 806.1 L1473.2 825.8 L1493.6 846.3 L1514.8 867.6 L1537.0 889.9 L1560.1 913.2 L1584.3 937.6 L1609.6 963.1 L1636.2 989.8 L1664.0 1017.9 L1693.2 1047.3 L1723.9 1078.2 L1756.3 1110.8 L1790.4 1145.2 L1826.4 1181.4 L1864.5 1219.8 L1904.8 1260.4 L1947.6 1303.4 L1993.0 1349.2 L2041.4 1397.9 L2093.0 1449.9 L2148.3 1505.5 L2207.4 1565.1 L2271.0 1629.1 L2339.5 1698.1 L2413.5 1772.6 L2493.7 1853.4 L2580.9 1941.2 L2676.0 2037.0 L2780.3 2142.0 L2895.1 2257.6 L3022.0 2385.4 L3163.1 2527.5 L3320.9 2686.4 L3498.6 2865.4" fill="none" stroke="#9a3a4b" stroke-width="2.6"/><path d="M-6904.8 2607.3 L-6555.7 2538.7 L-6223.5 2473.3 L-5907.1 2411.1 L-5605.3 2351.7 L-5317.2 2295.1 L-5041.8 2240.9 L-4778.4 2189.1 L-4526.1 2139.5 L-4284.2 2091.9 L-4052.2 2046.3 L-3829.5 2002.5 L-3615.4 1960.4 L-3409.6 1919.9 L-3211.5 1880.9 L-3020.6 1843.4 L-2836.8 1807.2 L-2659.4 1772.3 L-2488.3 1738.6 L-2323.0 1706.1 L-2163.3 1674.7 L-2008.9 1644.4 L-1859.6 1615.0 L-1715.0 1586.6 L-1575.1 1559.0 L-1439.5 1532.4 L-1308.0 1506.5 L-1180.6 1481.4 L-1056.9 1457.1 L-936.8 1433.5 L-820.3 1410.6 L-707.0 1388.3 L-596.9 1366.6 L-489.9 1345.6 L-385.8 1325.1 L-284.5 1305.2 L-185.9 1285.8 L-89.9 1266.9 L3.7 1248.5 L94.8 1230.6 L183.7 1213.1 L270.3 1196.1 L354.8 1179.5 L437.2 1163.2 L517.7 1147.4 L596.2 1132.0 L672.9 1116.9 L747.8 1102.1 L821.0 1087.7 L892.6 1073.7 L962.5 1059.9 L1030.9 1046.5 L1097.8 1033.3 L1163.2 1020.4 L1227.2 1007.8 L1289.9 995.5 L1351.3 983.5 L1411.3 971.6 L1470.2 960.1 L1527.8 948.7 L1584.3 937.6 L1639.7 926.7 L1693.9 916.1 L1747.1 905.6 L1799.3 895.3 L1850.5 885.3 L1900.7 875.4 L1949.9 865.7 L1998.2 856.2 L2045.7 846.9 L2092.2 837.7 L2138.0 828.7 L2182.9 819.9 L2227.0 811.2 L2270.3 802.7 L2312.9 794.3 L2354.7 786.1 L2395.8 778.0 L2436.2 770.1 L2475.9 762.2 L2515.0 754.6 L2553.4 747.0 L2591.1 739.6 L2628.3 732.3 L2664.8 725.1 L2700.8 718.0 L2736.2 711.0 L2771.0 704.2 L2805.3 697.5 L2839.0 690.8 L2872.2 684.3 L2904.9 677.9 L2937.2 671.5 L2968.9 665.3 L3000.1 659.1 L3030.9 653.1 L3061.2 647.1 L3091.1 641.2 L3120.6 635.4 L3149.6 629.7 L3178.2 624.1 L3206.4 618.6 L3234.2 613.1 L3261.6 607.7 L3288.6 602.4 L3315.3 597.1 L3341.5 592.0 L3367.5 586.9 L3393.0 581.9 L3418.2 576.9 L3443.1 572.0 L3467.7 567.2 L3491.9 562.4 L3515.8 557.7 L3539.4 553.1 L3562.7 548.5 L3585.7 544.0 L3608.4 539.5 L3630.8 535.1 L3652.9 530.7 L3674.8 526.4 L3696.4 522.2 L3717.7 518.0 L3738.7 513.9 L3759.5 509.8 L3780.0 505.7 L3800.3 501.7 L3820.4 497.8 L3840.2 493.9 L3859.7 490.1 L3879.1 486.3 L3898.2 482.5 L3917.1 478.8 L3935.7 475.1 L3954.2 471.5 L3972.4 467.9 L3990.4 464.3 L4008.3 460.8 L4025.9 457.4 L4043.3 453.9 L4060.5 450.6 L4077.6 447.2 L4094.4 443.9 L4111.1 440.6 L4127.6 437.4 L4143.9 434.2 L4160.0 431.0 L4176.0 427.9 L4191.8 424.7 L4207.4 421.7 L4222.8 418.6 L4238.1 415.6 L4253.3 412.7 L4268.2 409.7 L4283.0 406.8 L4297.7 403.9 L4312.2 401.1 L4326.6 398.2 L4340.8 395.4 L4354.9 392.7 L4368.8 389.9 L4382.6 387.2 L4396.3 384.5 L4409.8 381.9 L4423.2 379.2 L4436.5 376.6 L4449.6 374.0 L4462.6 371.5 L4475.5 368.9 L4488.2 366.4 L4500.9 363.9 L4513.4 361.5 L4525.8 359.0 L4538.1 356.6 L4550.2 354.2 L4562.3 351.9 L4574.2 349.5 L4586.0 347.2 L4597.8 344.9 L4609.4 342.6 L4620.9 340.3 L4632.3 338.1 L4643.6 335.9 L4654.8 333.7 L4665.9 331.5 L4676.9 329.3 L4687.7 327.2 L4698.6 325.1 L4709.3 323.0 L4719.9 320.9 L4730.4 318.8 L4740.8 316.8 L4751.2 314.7 L4761.4 312.7 L4771.6 310.7 L4781.6 308.7 L4791.6 306.8 L4801.5 304.8 L4811.4 302.9 L4821.1 301.0 L4830.8 299.1 L4840.3 297.2 L4849.8 295.3 L4859.3 293.5 L4868.6 291.6 L4877.9 289.8 L4887.0 288.0 L4896.2 286.2 L4905.2 284.4 L4914.2 282.7 L4923.1 280.9 L4931.9 279.2 L4940.7 277.4 L4949.3 275.7 L4958.0 274.0 L4966.5 272.4 L4975.0 270.7 L4983.4 269.0 L4991.8 267.4 L5000.0 265.8 L5008.3 264.1 L5016.4 262.5 L5024.5 261.0 L5032.6 259.4 L5040.5 257.8 L5048.4 256.2 L5056.3 254.7 L5064.1 253.2 L5071.8 251.6 L5079.5 250.1 L5087.1 248.6 L5094.7 247.1 L5102.2 245.7 L5109.6 244.2 L5117.0 242.8 L5124.4 241.3 L5131.7 239.9 L5138.9 238.4 L5146.1 237.0 L5153.2 235.6 L5160.3 234.2 L5167.4 232.9 L5174.3 231.5 L5181.3 230.1 L5188.2 228.8 L5195.0 227.4 L5201.8 226.1 L5208.5 224.8 L5215.2 223.4 L5221.9 222.1 L5228.5 220.8 L5235.0 219.5 L5241.5 218.3 L5248.0 217.0 L5254.4 215.7 L5260.8 214.5 L5267.2 213.2 L5273.4 212.0 L5279.7 210.8" fill="none" stroke="#6c9a2b" stroke-width="2.6"/><polygon points="1425.5,802.0 1642.8,765.8 1752.8,852.2 1744.6,1073.4 1519.6,1123.6 1431.0,1015.0" fill="none" stroke="#f5a12b" stroke-width="7" stroke-linejoin="round"/><polygon points="1425.5,802.0 1642.8,765.8 1752.8,852.2 1516.3,895.4" fill="#8e8f90" /><polygon points="1425.5,802.0 1516.3,895.4 1519.6,1123.6 1431.0,1015.0" fill="#808181" /><polygon points="1516.3,895.4 1752.8,852.2 1744.6,1073.4 1519.6,1123.6" fill="#6f7070" /><g clip-path="url(#cubeclip)"><g fill="none" stroke="#4a4a4a" stroke-width="1.6"><path d="M-56.6 51.2L661.0 30.8M-61.5 53.0L662.2 32.2M-38.5 54.0L663.5 33.7M-43.2 55.9L664.8 35.2M-48.1 57.8L666.2 36.8M-53.0 59.7L667.5 38.3M-58.0 61.7L668.9 39.9M-38.9 64.8L671.7 43.2M-43.9 66.8L673.2 44.8M-49.0 68.9L674.7 46.5M35.0 68.3L676.2 48.2M147.3 66.7L677.7 50.0M229.9 66.1L679.3 51.8M339.7 64.5L680.8 53.6M420.9 63.9L682.4 55.4M501.6 63.3L684.1 57.3M-29.2 50.4L-38.5 54.0M-2.1 49.6L-38.9 64.8M24.9 48.9L-19.3 68.0M51.7 48.1L5.5 69.2M78.2 47.4L35.0 68.3M104.6 46.6L64.3 67.4M130.8 45.9L93.3 66.5M156.8 45.1L118.5 67.6M182.5 44.4L147.3 66.7M233.5 42.9L201.5 67.0M258.8 42.2L229.9 66.1M283.8 41.5L258.1 65.2M308.7 40.8L286.0 64.3M333.3 40.1L312.0 65.4M357.8 39.4L339.7 64.5M382.2 38.7L367.3 63.7M406.3 38.0L393.6 64.8M430.3 37.3L420.9 63.9M477.7 36.0L474.7 64.2M501.2 35.3L501.6 63.3M524.5 34.6L528.3 62.4M547.6 34.0L555.3 63.5M570.6 33.3L581.8 62.7M593.4 32.7L608.1 61.8M616.1 32.0L634.2 60.9M638.6 31.4L661.5 62.0" stroke-opacity="0.05"/><path d="M-54.2 71.1L35.0 68.3M-59.5 73.2L147.3 66.7M-64.9 75.4L229.9 66.1M-39.4 76.7L339.7 64.5M-44.7 79.0L420.9 63.9M-50.1 81.3L501.6 63.3M-61.2 86.1L687.4 61.2M-66.9 88.6L689.2 63.2M-40.0 90.0L690.9 65.2M-45.6 92.5L692.7 67.2M-51.3 95.1L694.5 69.3M-57.1 97.8L696.4 71.5M-63.1 100.5L698.3 73.6M-69.1 103.3L700.2 75.9M-40.6 104.9L702.2 78.1M-52.6 110.7L706.3 82.8M-58.8 113.7L708.3 85.2M-65.2 116.8L710.5 87.6M-71.7 119.9L712.7 90.1M-41.3 121.7L714.9 92.7M-47.7 124.9L717.1 95.3M-54.1 128.3L719.5 97.9M-60.8 131.7L721.8 100.7M-67.6 135.2L724.2 103.4M-42.2 140.8L729.2 109.2M-48.9 144.5L731.8 112.1M63.2 143.3L734.4 115.2M250.1 139.0L737.1 118.3M395.4 136.2L739.9 121.4M538.1 133.6L742.7 124.7M643.7 132.5L745.6 128.0M-19.3 68.0L-39.4 76.7M5.5 69.2L-40.0 90.0M35.0 68.3L-40.6 104.9M64.3 67.4L-41.3 121.7M93.3 66.5L-42.2 140.8M118.5 67.6L-15.7 146.7M147.3 66.7L23.9 145.0M201.5 67.0L102.0 141.7M229.9 66.1L140.4 140.1M258.1 65.2L174.4 142.2M286.0 64.3L212.5 140.6M312.0 65.4L250.1 139.0M339.7 64.5L287.4 137.4M367.3 63.7L322.0 139.4M393.6 64.8L358.9 137.8M420.9 63.9L395.4 136.2M474.7 64.2L466.9 136.7M501.6 63.3L502.7 135.1M528.3 62.4L538.1 133.6M555.3 63.5L573.1 132.1M581.8 62.7L609.0 134.0M608.1 61.8L643.7 132.5M634.2 60.9L678.1 131.0M661.5 62.0L712.0 129.5" stroke-opacity="0.09"/><path d="M-63.1 63.7L670.3 41.5M-55.9 148.3L63.2 143.3M-63.0 152.3L250.1 139.0M-70.3 156.3L395.4 136.2M-77.8 160.4L538.1 133.6M-43.1 162.8L643.7 132.5M-50.4 167.0L748.6 131.4M-57.9 171.5L751.6 134.9M-73.5 180.7L757.9 142.1M-81.6 185.4L761.2 145.9M-44.2 188.2L764.5 149.7M-52.1 193.2L768.0 153.6M-60.2 198.4L771.5 157.7M-68.6 203.7L775.1 161.8M-77.2 209.2L778.8 166.1M-37.1 212.3L782.6 170.5M-45.4 218.1L786.5 175.0M136.4 219.5L794.7 184.4M368.6 212.6L799.0 189.3M592.2 205.9L803.4 194.3M766.2 201.8L807.9 199.5M-15.7 146.7L-43.1 162.8M23.9 145.0L-44.2 188.2M208.1 43.7L172.9 67.9M102.0 141.7L-12.1 227.4M140.4 140.1L38.1 224.7M174.4 142.2L87.6 222.1M212.5 140.6L136.4 219.5M250.1 139.0L184.5 216.9M287.4 137.4L232.0 214.4M322.0 139.4L275.3 217.6M358.9 137.8L322.3 215.1M395.4 136.2L368.6 212.6M454.1 36.7L449.4 57.2M466.9 136.7L459.3 207.7M502.7 135.1L503.8 210.8M538.1 133.6L548.3 208.3M573.1 132.1L592.2 205.9M609.0 134.0L635.6 203.5M643.7 132.5L681.1 206.6M678.1 131.0L723.9 204.2M712.0 129.5L766.2 201.8" stroke-opacity="0.14"/><path d="M-55.6 83.7L685.7 59.2M-46.6 107.8L704.2 80.4M-74.5 138.8L726.7 106.3M-65.6 176.0L754.7 138.4M-62.9 230.1L136.4 219.5M-72.1 236.4L368.6 212.6M-81.6 243.0L592.2 205.9M-37.8 246.7L766.2 201.8M-46.9 253.6L812.5 204.9M-56.4 260.7L817.3 210.4M-66.2 268.1L822.3 216.0M-76.4 275.7L827.4 221.9M-86.9 283.6L832.7 227.9M-48.8 296.6L843.7 240.6M-59.3 305.3L849.5 247.3M52.6 306.3L855.5 254.2M395.3 292.2L861.7 261.3M665.7 282.4L868.2 268.7M172.9 67.9L-6.1 191.0M-12.1 227.4L-37.8 246.7M38.1 224.7L-38.6 288.2M87.6 222.1L-8.3 310.3M136.4 219.5L52.6 306.3M184.5 216.9L112.5 302.5M232.0 214.4L171.3 298.6M275.3 217.6L229.2 294.9M322.3 215.1L282.1 299.7M368.6 212.6L339.2 295.9M449.4 57.2L424.4 165.9M459.3 207.7L450.6 288.5M503.8 210.8L504.9 284.9M548.3 208.3L559.4 289.5M592.2 205.9L613.0 285.9M635.6 203.5L665.7 282.4M681.1 206.6L717.5 278.9M723.9 204.2L768.5 275.4M766.2 201.8L824.6 279.8" stroke-opacity="0.18"/><path d="M-54.0 224.0L790.6 179.6M-38.6 288.2L838.1 234.2M-70.2 314.3L52.6 306.3M-81.6 323.7L395.3 292.2M-93.4 333.5L665.7 282.4M-39.7 339.2L874.8 276.4M-51.0 349.6L881.7 284.3M-62.8 360.5L888.9 292.5M-75.2 371.9L896.3 301.1M-101.6 396.2L912.1 319.2M-41.0 403.4L920.5 328.8M441.0 377.5L929.2 338.8M760.2 363.6L938.2 349.2M-6.1 191.0L-37.1 212.3M-8.3 310.3L-39.7 339.2M52.6 306.3L-41.0 403.4M112.5 302.5L32.3 397.7M171.3 298.6L104.1 392.2M229.2 294.9L174.4 386.7M282.1 299.7L237.5 393.7M339.2 295.9L306.7 388.2M424.4 165.9L395.3 292.2M450.6 288.5L441.0 377.5M504.9 284.9L506.2 372.3M559.4 289.5L570.1 367.3M613.0 285.9L632.8 362.3M665.7 282.4L698.6 368.6M717.5 278.9L760.2 363.6M768.5 275.4L820.7 358.7M824.6 279.8L880.0 353.9" stroke-opacity="0.22"/><path d="M-88.1 383.8L904.1 309.9M-53.8 416.8L441.0 377.5M-67.4 430.8L760.2 363.6M-81.6 445.5L947.7 360.0M-96.5 461.0L957.6 371.4M-112.2 477.3L967.9 383.2M-42.7 486.8L978.7 395.6M-57.6 504.5L990.0 408.6M877.6 449.7L1014.3 436.5M32.3 397.7L-42.7 486.8M104.1 392.2L29.0 496.6M174.4 386.7L113.4 488.8M237.5 393.7L187.7 498.7M306.7 388.2L270.5 490.9M395.3 292.2L362.3 436.0M441.0 377.5L430.4 475.9M506.2 372.3L507.6 468.6M570.1 367.3L583.0 461.5M632.8 362.3L656.8 454.6M698.6 368.6L734.8 463.4M760.2 363.6L807.0 456.5M820.7 358.7L877.6 449.7M880.0 353.9L946.7 443.0" stroke-opacity="0.27"/><path d="M-73.3 523.2L1001.8 422.2M-90.0 543.0L877.6 449.7M-107.6 564.0L1027.3 451.5M-126.4 586.2L1041.1 467.3M-44.9 599.3L1055.5 483.9M-62.6 623.9L1070.8 501.4M-81.5 650.1L1086.9 519.9M-101.6 678.1L8.0 665.5M1025.7 548.5L1104.0 539.5M29.0 496.6L-44.9 599.3M113.4 488.8L8.0 665.5M187.7 498.7L114.3 653.3M270.5 490.9L226.5 615.8M362.3 436.0L323.4 605.0M430.4 475.9L417.7 594.5M507.6 468.6L509.3 584.3M583.0 461.5L598.5 574.3M656.8 454.6L685.3 564.7M734.8 463.4L769.8 555.3M807.0 456.5L852.2 546.1M877.6 449.7L945.3 557.8M946.7 443.0L1025.7 548.5" stroke-opacity="0.32"/><path d="M8.0 665.5L1025.7 548.5M-123.3 708.2L1122.1 560.3M-146.5 740.5L1141.2 582.3M-48.2 759.6L1161.7 605.8M-69.9 796.0L1183.4 630.7M-93.4 835.3L1206.6 657.4M-118.9 878.1L1231.5 685.9M-146.7 924.7L263.9 863.8M1062.9 745.5L1258.1 716.6M2680.5 829.3L3244.9 704.7M2854.8 852.4L3218.3 766.9M2958.2 896.6L3258.6 821.0M3151.7 923.1L3229.2 902.1M8.0 665.5L-48.2 759.6M114.3 653.3L-27.7 952.6M226.5 615.8L132.3 883.3M323.4 605.0L263.9 863.8M417.7 594.5L390.7 845.1M509.3 584.3L512.9 827.0M598.5 574.3L630.7 809.5M685.3 564.7L744.5 792.7M769.8 555.3L854.3 776.4M852.2 546.1L960.3 760.7M945.3 557.8L1062.9 745.5M1025.7 548.5L1162.1 730.8M2594.5 790.5L2680.5 829.3M2672.2 774.3L2854.8 852.4M2747.4 758.6L3151.7 923.1M2820.0 743.5L3229.2 902.1M2890.3 728.9L3303.9 881.9M2958.3 714.8L3258.6 821.0M3024.2 701.0L3218.3 766.9M3088.0 687.8L3283.8 751.5M3149.9 674.9L3244.9 704.7" stroke-opacity="0.36"/><path d="M263.9 863.8L1062.9 745.5M-177.2 975.7L1286.8 749.5M-53.2 1006.3L1317.7 785.0M-81.3 1065.5L1351.2 823.4M-112.4 1131.0L1387.5 865.1M-147.1 1204.0L1427.0 910.5M-229.6 1378.0L1517.6 1014.5M1440.8 1103.0L2680.5 829.3M1756.3 1110.8L2854.8 852.4M2075.7 1118.7L2958.2 896.6M2284.4 1157.7L3151.7 923.1M2506.3 1199.1L3276.5 973.8M2742.7 1243.2L3243.9 1083.7M2881.6 1329.8L3301.1 1183.4M3154.9 1383.0L3264.6 1340.6M-27.7 952.6L-53.2 1006.3M132.3 883.3L-61.9 1434.8M263.9 863.8L143.1 1389.6M390.7 845.1L346.3 1258.2M512.9 827.0L518.8 1222.3M630.7 809.5L682.7 1188.2M744.5 792.7L838.7 1155.8M854.3 776.4L987.3 1124.8M960.3 760.7L1129.0 1095.3M1062.9 745.5L1305.5 1132.9M1162.1 730.8L1440.8 1103.0M1517.6 1014.5L1569.9 1074.5M1749.8 966.2L1954.0 1149.3M1858.9 943.5L2075.7 1118.7M1963.6 921.7L2284.4 1157.7M2064.3 900.8L2506.3 1199.1M2161.1 880.6L2881.6 1329.8M2254.3 861.2L3336.9 1488.4M2344.0 842.6L3264.6 1340.6M2430.5 824.6L3368.4 1300.5M2513.9 807.2L3301.1 1183.4M2680.5 829.3L3243.9 1083.7M2854.8 852.4L3330.7 1056.1M3151.7 923.1L3276.5 973.8" stroke-opacity="0.4"/><path d="M-61.9 1434.8L1440.8 1103.0M-101.8 1547.8L1756.3 1110.8M-147.6 1678.1L2075.7 1118.7M-201.1 1830.0L2284.4 1157.7M19.7 1926.3L2506.3 1199.1M776.0 1869.1L2742.7 1243.2M1279.0 1889.1L2881.6 1329.8M1792.0 1909.6L3154.9 1383.0M2315.3 1930.5L3218.4 1539.8M3009.3 1873.1L3296.2 1732.1M143.1 1389.6L19.7 1926.3M346.3 1258.2L263.1 2032.3M518.8 1222.3L529.5 1947.5M682.7 1188.2L776.0 1869.1M838.7 1155.8L1049.7 1969.2M987.3 1124.8L1279.0 1889.1M1129.0 1095.3L1580.6 1991.3M1305.5 1132.9L1792.0 1909.6M1440.8 1103.0L2122.6 2013.9M1569.9 1074.5L2315.3 1930.5M1954.0 1149.3L2849.1 1951.9M2075.7 1118.7L3009.3 1873.1M2284.4 1157.7L3393.9 1973.6M2506.3 1199.1L3296.2 1732.1M2881.6 1329.8L3218.4 1539.8" stroke-opacity="0.45"/></g><path d="M1636.2 989.8 L1664.0 1017.9 L1693.2 1047.3 L1723.9 1078.2 L1756.3 1110.8 L1790.4 1145.2 L1826.4 1181.4 L1864.5 1219.8 L1904.8 1260.4 L1947.6 1303.4 L1993.0 1349.2 L2041.4 1397.9 L2093.0 1449.9 L2148.3 1505.5 L2207.4 1565.1 L2271.0 1629.1 L2339.5 1698.1 L2413.5 1772.6 L2493.7 1853.4 L2580.9 1941.2 L2676.0 2037.0 L2780.3 2142.0 L2895.1 2257.6 L3022.0 2385.4 L3163.1 2527.5 L3320.9 2686.4 L3498.6 2865.4" fill="none" stroke="#9a3a4b" stroke-width="2.6"/><path d="M-6904.8 2607.3 L-6555.7 2538.7 L-6223.5 2473.3 L-5907.1 2411.1 L-5605.3 2351.7 L-5317.2 2295.1 L-5041.8 2240.9 L-4778.4 2189.1 L-4526.1 2139.5 L-4284.2 2091.9 L-4052.2 2046.3 L-3829.5 2002.5 L-3615.4 1960.4 L-3409.6 1919.9 L-3211.5 1880.9 L-3020.6 1843.4 L-2836.8 1807.2 L-2659.4 1772.3 L-2488.3 1738.6 L-2323.0 1706.1 L-2163.3 1674.7 L-2008.9 1644.4 L-1859.6 1615.0 L-1715.0 1586.6 L-1575.1 1559.0 L-1439.5 1532.4 L-1308.0 1506.5 L-1180.6 1481.4 L-1056.9 1457.1 L-936.8 1433.5 L-820.3 1410.6 L-707.0 1388.3 L-596.9 1366.6 L-489.9 1345.6 L-385.8 1325.1 L-284.5 1305.2 L-185.9 1285.8 L-89.9 1266.9 L3.7 1248.5 L94.8 1230.6 L183.7 1213.1 L270.3 1196.1 L354.8 1179.5 L437.2 1163.2 L517.7 1147.4 L596.2 1132.0 L672.9 1116.9 L747.8 1102.1 L821.0 1087.7 L892.6 1073.7 L962.5 1059.9 L1030.9 1046.5 L1097.8 1033.3 L1163.2 1020.4 L1227.2 1007.8 L1289.9 995.5 L1351.3 983.5 L1411.3 971.6 L1470.2 960.1" fill="none" stroke="#6c9a2b" stroke-width="2.6"/></g><line x1="2041.7" y1="262.1" x2="1960.8" y2="1154.6" stroke="#262626" stroke-width="1.3"/><circle cx="2041.7" cy="262.1" r="18" fill="none" stroke="#000" stroke-width="1.8"/><circle cx="2041.7" cy="262.1" r="24" fill="none" stroke="#000" stroke-width="1.8" stroke-dasharray="6.5 6.1"/><polygon points="2041.7,256.6 2047.2,262.1 2041.7,267.6 2036.2,262.1" fill="none" stroke="#000" stroke-width="1.4"/><polygon points="1960.8,1151.6 1963.8,1154.6 1960.8,1157.6 1957.8,1154.6" fill="none" stroke="#222" stroke-width="1"/><path d="M564.7 879.7 L731.8 808.7 M564.7 879.7 L948.2 843.1 M564.7 879.7 L927.4 988.0 M564.7 879.7 L712.2 949.1 M731.8 808.7 L948.2 843.1 L927.4 988.0 L712.2 949.1 Z" fill="none" stroke="#000" stroke-width="1.5"/><polygon points="766.2,800.7 852.5,724.0 916.1,824.3" fill="#000" /><circle cx="1584.3" cy="937.6" r="19" fill="none" stroke="#fff" stroke-width="3"/><circle cx="1584.3" cy="937.6" r="19" fill="none" stroke="#e01010" stroke-width="3" stroke-dasharray="7.46 7.46" transform="rotate(12 1584.3 937.6)"/><path d="M1584.3 901.6 V915.6 M1584.3 953.6 V972.6 M1548.3 944.6 L1564.3 940.6 M1594.3 934.6 L1620.3 929.6 M1569.3 921.6 L1600.3 952.6" stroke="#000" stroke-width="2.2" fill="none"/><circle cx="1585.3" cy="937.6" r="5.5" fill="#f5a12b" stroke="#222" stroke-width="1.6"/></g></svg><div class="a" style="left:3.0px;top:53.0px;width:3166.0px;height:56.0px;background:rgba(48,48,48,0.66);border-radius:12px 12px 0 0;"></div><div class="a" style="left:3.0px;top:109.0px;width:221.0px;height:47.0px;background:rgba(48,48,48,0.66);border-radius:0 0 10px 0;"></div><div class="a" style="left:3009.0px;top:109.0px;width:160.0px;height:47.0px;background:rgba(48,48,48,0.66);border-radius:0 0 0 10px;"></div><div class="a" style="left:17.4px;top:58.8px;width:62.8px;height:39.4px;background:#3a3a3a;border-radius:9px;"></div><div class="a" style="left:18.6px;top:60.0px;width:60.4px;height:37.0px;background:#282828;border-radius:8px;"></div><svg class="a" style="left:0;top:0" width="3840" height="2019"><g stroke="#d6d6d6" stroke-width="2.1" fill="none" stroke-linecap="round"><path d="M29 77 H40.6 M27.1 85.1 H54.8 M36.2 72.3 L31.8 91.6 M47.8 80.2 L49.9 91.6"/><path d="M61.1 76.5 L67.4 83 L73.9 76.5"/></g><circle cx="48.1" cy="70.9" r="7" fill="#e0e0e0"/><path d="M43.6 70 A4.5 4.5 0 0 1 47.6 66.3" fill="none" stroke="#282828" stroke-width="1.6"/></svg><div class="a" style="left:91.4px;top:58.8px;width:215.8px;height:39.4px;background:#3a3a3a;border-radius:9px;"></div><div class="a" style="left:92.6px;top:60.0px;width:213.4px;height:37.0px;background:#282828;border-radius:8px;"></div><svg class="a" style="left:0;top:0" width="3840" height="2019"><g fill="none" stroke="#a8a8a8" stroke-width="2.4"><path d="M102.1 72.3 V65.4 H109 M120.9 65.4 H127.7 V72.3 M127.7 83.9 V90.7 H120.9 M109 90.7 H102.1 V83.9"/></g><rect x="107" y="70" width="15.8" height="15.8" rx="1.2" fill="#e6e6e6"/></svg><div class="t" style="left:143.5px;top:68.9px;font-size:23px;color:#e6e6e6;">Object Mode</div><svg class="a" style="left:283.0px;top:70.0px;" width="20" height="20" viewBox="0 0 20 20"><path d="M3 7 L10 13 L17 7" fill="none" stroke="#d0d0d0" stroke-width="2"/></svg><div class="t" style="left:333.0px;top:68.9px;font-size:23px;color:#e6e6e6;">View</div><div class="t" style="left:412.0px;top:68.9px;font-size:23px;color:#e6e6e6;">Select</div><div class="t" style="left:505.0px;top:68.9px;font-size:23px;color:#e6e6e6;">Add</div><div class="t" style="left:576.4px;top:68.9px;font-size:23px;color:#e6e6e6;">Object</div><div class="a" style="left:1335.6px;top:58.8px;width:152.7px;height:38.6px;background:#3a3a3a;border-radius:9px;"></div><div class="a" style="left:1336.8px;top:60.0px;width:150.3px;height:36.2px;background:#282828;border-radius:8px;"></div><svg class="a" style="left:1343.0px;top:63.0px;" width="40" height="32" viewBox="0 0 40 32"><g fill="none" stroke="#dcdcdc" stroke-width="2.2"><path d="M10 27 V4 M6 9 L10 4 L14 9 M10 27 H34 M29 23 L34 27 L29 31"/><path d="M10 27 L27 10 M21 10 H27 V16" stroke="#9a9a9a"/></g><circle cx="10" cy="27" r="3" fill="#282828" stroke="#dcdcdc" stroke-width="2"/></svg><div class="t" style="left:1388.0px;top:67.7px;font-size:23px;color:#e6e6e6;">Global</div><svg class="a" style="left:1465.0px;top:69.0px;" width="20" height="20" viewBox="0 0 20 20"><path d="M3 7 L10 13 L17 7" fill="none" stroke="#d0d0d0" stroke-width="2"/></svg><div class="a" style="left:1499.5px;top:58.8px;width:63.0px;height:38.6px;background:#3a3a3a;border-radius:9px;"></div><div class="a" style="left:1500.7px;top:60.0px;width:60.6px;height:36.2px;background:#282828;border-radius:8px;"></div><svg class="a" style="left:1506.0px;top:63.0px;" width="32" height="32" viewBox="0 0 32 32"><circle cx="12" cy="20" r="8" fill="none" stroke="#dcdcdc" stroke-width="2"/><circle cx="20" cy="12" r="8" fill="none" stroke="#dcdcdc" stroke-width="2"/><circle cx="16" cy="16" r="2.6" fill="#dcdcdc"/></svg><svg class="a" style="left:1539.0px;top:69.0px;" width="20" height="20" viewBox="0 0 20 20"><path d="M3 7 L10 13 L17 7" fill="none" stroke="#d0d0d0" stroke-width="2"/></svg><div class="a" style="left:1574.1px;top:58.8px;width:102.1px;height:38.6px;background:#3a3a3a;border-radius:9px;"></div><div class="a" style="left:1575.3px;top:60.0px;width:99.7px;height:36.2px;background:#282828;border-radius:8px;"></div><div class="a" style="left:1575.3px;top:60.0px;width:35.7px;height:36.2px;background:#545454;border-radius:8px 0 0 8px;"></div><svg class="a" style="left:1578.0px;top:63.0px;" width="32" height="32" viewBox="0 0 32 32"><path d="M8.7 7.1 A11.5 11.5 0 0 1 24.9 23.3 L18.5 29.7 L14.64 25.84 L21.04 19.44 A6 6 0 0 0 12.56 10.96 L6.16 17.36 L2.3 13.5 Z" fill="none" stroke="#b8b8b8" stroke-width="1.7" stroke-linejoin="round"/></svg><svg class="a" style="left:0;top:0" width="3840" height="2019"><path d="M1619.1 77.3 V90.6 M1631.1 77.3 V90.6 M1643 77.3 V90.6 M1624.9 81.6 V86.3 M1637 81.6 V86.3 M1619 83.8 H1643" fill="none" stroke="#c8c8c8" stroke-width="2.2"/><rect x="1638.1" y="65.2" width="7.7" height="7.7" rx="1" fill="#e6e6e6"/></svg><svg class="a" style="left:1653.0px;top:69.0px;" width="20" height="20" viewBox="0 0 20 20"><path d="M3 7 L10 13 L17 7" fill="none" stroke="#d0d0d0" stroke-width="2"/></svg><div class="a" style="left:1687.7px;top:58.8px;width:102.1px;height:38.6px;background:#3a3a3a;border-radius:9px;"></div><div class="a" style="left:1688.9px;top:60.0px;width:99.7px;height:36.2px;background:#282828;border-radius:8px;"></div><div class="a" style="left:1688.9px;top:60.0px;width:35.8px;height:36.2px;background:#545454;border-radius:8px 0 0 8px;"></div><svg class="a" style="left:1692.0px;top:62.0px;" width="30" height="32" viewBox="0 0 30 32"><circle cx="15" cy="16" r="12" fill="none" stroke="#9a9a9a" stroke-width="1.8"/><circle cx="15" cy="16" r="4" fill="#e0e0e0"/></svg><svg class="a" style="left:1730.0px;top:64.0px;" width="34" height="30" viewBox="0 0 34 30"><path d="M3 26 C10 26 11 4 16 4 C21 4 22 26 30 26" fill="none" stroke="#6a6a6a" stroke-width="2"/></svg><svg class="a" style="left:1767.0px;top:69.0px;" width="20" height="20" viewBox="0 0 20 20"><path d="M3 7 L10 13 L17 7" fill="none" stroke="#5a5a5a" stroke-width="2"/></svg><div class="a" style="left:2656.6px;top:58.8px;width:62.6px;height:38.4px;background:#3a3a3a;border-radius:9px;"></div><div class="a" style="left:2657.8px;top:60.0px;width:60.2px;height:36.0px;background:#282828;border-radius:8px;"></div><svg class="a" style="left:2661.0px;top:62.0px;" width="36" height="34" viewBox="0 0 36 34"><path d="M9 12 L24 18 L17 20 L14 28 Z" fill="#dcdcdc"/><path d="M14 8 Q21 1 28 8 Q21 15 14 8 Z" fill="none" stroke="#dcdcdc" stroke-width="2"/><circle cx="21" cy="8" r="2.4" fill="#dcdcdc"/></svg><svg class="a" style="left:2696.0px;top:69.0px;" width="20" height="20" viewBox="0 0 20 20"><path d="M3 7 L10 13 L17 7" fill="none" stroke="#d0d0d0" stroke-width="2"/></svg><div class="a" style="left:2731.0px;top:58.8px;width:78.2px;height:38.4px;background:#3a3a3a;border-radius:9px;"></div><div class="a" style="left:2732.2px;top:60.0px;width:75.8px;height:36.0px;background:#282828;border-radius:8px;"></div><div class="a" style="left:2732.2px;top:60.0px;width:36.1px;height:36.0px;background:#4772b3;border-radius:8px 0 0 8px;"></div><svg class="a" style="left:2734.0px;top:61.0px;" width="34" height="34" viewBox="0 0 34 34"><path d="M5 8 Q24 10 24 30 M14 22 L27 9 M19 8 H28 V17" fill="none" stroke="#fff" stroke-width="2"/><circle cx="9" cy="28" r="3" fill="none" stroke="#fff" stroke-width="2"/></svg><svg class="a" style="left:2778.0px;top:69.0px;" width="20" height="20" viewBox="0 0 20 20"><path d="M3 7 L10 13 L17 7" fill="none" stroke="#d0d0d0" stroke-width="2"/></svg><div class="a" style="left:2820.8px;top:58.8px;width:78.3px;height:38.4px;background:#3a3a3a;border-radius:9px;"></div><div class="a" style="left:2822.0px;top:60.0px;width:75.9px;height:36.0px;background:#282828;border-radius:8px;"></div><div class="a" style="left:2822.0px;top:60.0px;width:36.0px;height:36.0px;background:#4772b3;border-radius:8px 0 0 8px;"></div><svg class="a" style="left:2824.0px;top:61.0px;" width="34" height="34" viewBox="0 0 34 34"><circle cx="22" cy="12" r="8" fill="#fff"/><circle cx="13" cy="22" r="8" fill="none" stroke="#fff" stroke-width="2.2"/><path d="M16 12 L22 18" stroke="#4772b3" stroke-width="2"/></svg><svg class="a" style="left:2868.0px;top:69.0px;" width="20" height="20" viewBox="0 0 20 20"><path d="M3 7 L10 13 L17 7" fill="none" stroke="#d0d0d0" stroke-width="2"/></svg><div class="a" style="left:2910.8px;top:58.8px;width:38.2px;height:38.4px;background:#3a3a3a;border-radius:9px;"></div><div class="a" style="left:2912.0px;top:60.0px;width:35.8px;height:36.0px;background:#545454;border-radius:8px;"></div><svg class="a" style="left:2914.0px;top:62.0px;" width="32" height="32" viewBox="0 0 32 32"><path d="M4 12 V28 H20 V24 M10 8 H26 V24 H10 Z" fill="none" stroke="#e0e0e0" stroke-width="2"/><path d="M13 16 V20 H17" fill="none" stroke="#e0e0e0" stroke-width="2"/></svg><div class="a" style="left:2960.6px;top:58.8px;width:193.2px;height:38.4px;background:#3a3a3a;border-radius:9px;"></div><div class="a" style="left:2961.8px;top:60.0px;width:190.8px;height:36.0px;background:#282828;border-radius:8px;"></div><div class="a" style="left:2961.8px;top:60.0px;width:38.2px;height:36.0px;background:#545454;border-radius:8px 0 0 8px;"></div><div class="a" style="left:3000.0px;top:60.0px;width:37.0px;height:36.0px;background:#4772b3;"></div><div class="a" style="left:3037.0px;top:60.0px;width:37.5px;height:36.0px;background:#545454;"></div><div class="a" style="left:3075.0px;top:60.0px;width:37.0px;height:36.0px;background:#545454;"></div><svg class="a" style="left:2965.0px;top:63.0px;" width="32" height="30" viewBox="0 0 32 30"><circle cx="16" cy="15" r="13" fill="none" stroke="#c8c8c8" stroke-width="2"/><ellipse cx="16" cy="15" rx="6" ry="13" fill="none" stroke="#c8c8c8" stroke-width="2"/><path d="M3 11 H29 M3 19 H29" stroke="#c8c8c8" stroke-width="2"/></svg><svg class="a" style="left:3003.0px;top:63.0px;" width="32" height="30" viewBox="0 0 32 30"><circle cx="15.5" cy="15" r="13" fill="#dde4f0" stroke="#fff" stroke-width="1.5"/></svg><svg class="a" style="left:3040.0px;top:63.0px;" width="32" height="30" viewBox="0 0 32 30"><circle cx="16" cy="15" r="13" fill="none" stroke="#c8c8c8" stroke-width="2"/><path d="M16 2 A13 13 0 0 0 3 15 H16 Z" fill="#c8c8c8"/><path d="M16 15 L24 24" stroke="#c8c8c8" stroke-width="2" stroke-dasharray="2 2"/></svg><svg class="a" style="left:3078.0px;top:63.0px;" width="32" height="30" viewBox="0 0 32 30"><circle cx="16" cy="15" r="13" fill="none" stroke="#c8c8c8" stroke-width="2"/><path d="M9 11 A8 8 0 0 1 14 6" fill="none" stroke="#c8c8c8" stroke-width="2.2"/><path d="M17 26 L28 15" stroke="#c8c8c8" stroke-width="2" stroke-dasharray="2 2"/></svg><svg class="a" style="left:3122.0px;top:69.0px;" width="20" height="20" viewBox="0 0 20 20"><path d="M3 7 L10 13 L17 7" fill="none" stroke="#d0d0d0" stroke-width="2"/></svg><div class="a" style="left:16.7px;top:112.0px;width:190.2px;height:38.1px;background:#3a3a3a;border-radius:9px;"></div><div class="a" style="left:17.9px;top:113.2px;width:187.8px;height:35.7px;background:#545454;border-radius:8px;"></div><div class="a" style="left:17.9px;top:113.2px;width:36.1px;height:35.7px;background:#4772b3;border-radius:8px 0 0 8px;"></div><div class="a" style="left:53.8px;top:113.2px;width:2.0px;height:35.7px;background:#3a3a3a;"></div><div class="a" style="left:91.8px;top:113.2px;width:2.0px;height:35.7px;background:#3a3a3a;"></div><div class="a" style="left:129.9px;top:113.2px;width:2.0px;height:35.7px;background:#3a3a3a;"></div><div class="a" style="left:168.0px;top:113.2px;width:2.0px;height:35.7px;background:#3a3a3a;"></div><svg class="a" style="left:20.0px;top:115.0px;" width="34" height="32" viewBox="0 0 34 32"><rect x="3.5" y="3.5" width="26" height="25" fill="none" stroke="#fff" stroke-width="2.4" stroke-dasharray="4 3"/></svg><svg class="a" style="left:57.0px;top:115.0px;" width="34" height="32" viewBox="0 0 34 32"><path d="M4 12 H11 V4 H29 V20 H22 V28 H4 Z" fill="#c8c8c8"/></svg><svg class="a" style="left:94.0px;top:115.0px;" width="34" height="32" viewBox="0 0 34 32"><path d="M4 12 V28 H22" fill="none" stroke="#c8c8c8" stroke-width="2.2" stroke-dasharray="3 3"/><path d="M11 4 H29 V20 H22 V12 H11 Z" fill="#c8c8c8"/></svg><svg class="a" style="left:132.0px;top:115.0px;" width="34" height="32" viewBox="0 0 34 32"><path d="M4 12 H11 V4 H29 V20 H22 V28 H4 Z M11 12 V20 H22 V12 Z" fill="#c8c8c8" fill-rule="evenodd"/></svg><svg class="a" style="left:170.0px;top:115.0px;" width="34" height="32" viewBox="0 0 34 32"><rect x="4" y="4" width="26" height="25" fill="none" stroke="#c8c8c8" stroke-width="2.2" stroke-dasharray="3 3"/><rect x="11" y="10" width="12" height="12" fill="#c8c8c8"/></svg><div class="a" style="left:3025.6px;top:111.7px;width:127.1px;height:38.0px;background:#3a3a3a;border-radius:9px;"></div><div class="a" style="left:3026.8px;top:112.9px;width:124.7px;height:35.6px;background:#282828;border-radius:8px;"></div><div class="t" style="left:3041.5px;top:120.3px;font-size:23px;color:#e6e6e6;">Options</div><svg class="a" style="left:3128.0px;top:121.0px;" width="20" height="20" viewBox="0 0 20 20"><path d="M3 7 L10 13 L17 7" fill="none" stroke="#d0d0d0" stroke-width="2"/></svg><div class="a" style="left:18.0px;top:175.0px;width:77.0px;height:66.0px;background:#4772b3;border-radius:8px 8px 0 0;"></div><svg class="a" style="left:30.0px;top:183.0px;overflow:visible" width="50" height="50" viewBox="0 0 50 50"><rect x="4" y="3.5" width="43" height="43" fill="none" stroke="#ffb52a" stroke-width="2.6" stroke-dasharray="6.5 4.5"/><path d="M19.7 14.5 V35.8 L24.5 30.5 L35.5 28 Z" fill="#e0e0e0"/><path d="M60.8 53.6 L53.9 53.6 L60.8 47.4 Z" fill="#9ab0d4"/></svg><div class="a" style="left:18.0px;top:243.0px;width:77.0px;height:68.0px;background:#282828;border-radius:0 0 8px 8px;box-shadow:0 2px 2px rgba(0,0,0,0.25);"></div><svg class="a" style="left:31.0px;top:253.0px;" width="50" height="50" viewBox="0 0 50 50"><circle cx="25" cy="24" r="22" fill="none" stroke="#fff" stroke-width="3"/><circle cx="25" cy="24" r="22" fill="none" stroke="#b04040" stroke-width="3" stroke-dasharray="8.6 8.6"/><path d="M25 8 V20 M25 28 V40 M9 24 H21 M29 24 H41" stroke="#dcdcdc" stroke-width="2"/></svg><div class="a" style="left:18.0px;top:325.0px;width:77.0px;height:66.0px;background:#282828;border-radius:8px 8px 0 0;box-shadow:0 2px 2px rgba(0,0,0,0.2);"></div><div class="a" style="left:18.0px;top:393.0px;width:77.0px;height:68.0px;background:#282828;border-radius:0;box-shadow:0 2px 2px rgba(0,0,0,0.2);"></div><div class="a" style="left:18.0px;top:463.0px;width:77.0px;height:68.0px;background:#282828;border-radius:0;box-shadow:0 2px 2px rgba(0,0,0,0.2);"></div><div class="a" style="left:18.0px;top:533.0px;width:77.0px;height:68.0px;background:#282828;border-radius:0 0 8px 8px;box-shadow:0 2px 2px rgba(0,0,0,0.2);"></div><div class="a" style="left:18.0px;top:615.0px;width:77.0px;height:66.0px;background:#282828;border-radius:8px 8px 0 0;box-shadow:0 2px 2px rgba(0,0,0,0.2);"></div><div class="a" style="left:18.0px;top:683.0px;width:77.0px;height:67.0px;background:#282828;border-radius:0 0 8px 8px;box-shadow:0 2px 2px rgba(0,0,0,0.2);"></div><div class="a" style="left:18.0px;top:765.0px;width:77.0px;height:66.0px;background:#282828;border-radius:8px;box-shadow:0 2px 2px rgba(0,0,0,0.2);"></div><svg class="a" style="left:31.0px;top:337.0px;" width="50" height="50" viewBox="0 0 50 50"><g fill="#dcdcdc"><path d="M25 4 L31 12 H19 Z M25 46 L31 38 H19 Z M4 25 L12 19 V31 Z M46 25 L38 19 V31 Z"/><rect x="23" y="14" width="4" height="6"/><rect x="23" y="30" width="4" height="6"/><rect x="14" y="23" width="6" height="4"/><rect x="30" y="23" width="6" height="4"/></g></svg><svg class="a" style="left:31.0px;top:402.0px;" width="50" height="50" viewBox="0 0 50 50"><path d="M13 22 A13 13 0 0 1 37 16 M37 30 A13 13 0 0 1 13 34" fill="none" stroke="#e0e0e0" stroke-width="2"/><path d="M5 22 H15 L10 31 Z M35 29 H45 L40 20 Z" fill="#e0e0e0"/><path d="M25 18 L32 25 L25 32 L18 25 Z" fill="#b8b8b8"/></svg><svg class="a" style="left:31.0px;top:472.0px;overflow:visible" width="50" height="50" viewBox="0 0 50 50"><path d="M15 15 V10 H37 V36 H26" fill="none" stroke="#c8c8c8" stroke-width="2.2"/><rect x="9" y="25" width="16" height="16" fill="#e0e0e0"/><path d="M24 26 L34 16 M28 14 H35 V21" fill="none" stroke="#e0e0e0" stroke-width="2.2"/><path d="M48 48 L40 48 L48 40 Z" fill="#8a8a8a"/></svg><svg class="a" style="left:31.0px;top:542.0px;" width="50" height="50" viewBox="0 0 50 50"><circle cx="25" cy="25" r="18" fill="none" stroke="#e0e0e0" stroke-width="2" stroke-dasharray="12 6"/><rect x="18" y="18" width="14" height="14" fill="#e0e0e0"/><path d="M25 3 L30 10 H20 Z M25 47 L30 40 H20 Z M3 25 L10 20 V30 Z M47 25 L40 20 V30 Z" fill="#e0e0e0"/></svg><svg class="a" style="left:31.0px;top:622.0px;overflow:visible" width="50" height="52" viewBox="0 0 50 52"><path d="M34 6 L40 12 L18 34 L10 37 L13 29 Z" fill="#e0e0e0"/><path d="M10 40 Q20 46 28 36 Q35 28 43 38" fill="none" stroke="#8fd1a8" stroke-width="2.2"/><path d="M48 50 L40 50 L48 42 Z" fill="#8a8a8a"/></svg><svg class="a" style="left:31.0px;top:692.0px;" width="50" height="52" viewBox="0 0 50 52"><path d="M16 4 V46 H46" fill="none" stroke="#e0e0e0" stroke-width="5"/><path d="M20 18 A22 22 0 0 1 42 42 H20 Z" fill="#8fd8ae"/><path d="M23 14 A26 26 0 0 1 46 38" fill="none" stroke="#8fd8ae" stroke-width="2"/></svg><svg class="a" style="left:31.0px;top:772.0px;overflow:visible" width="50" height="52" viewBox="0 0 50 52"><path d="M8 4 V16 M2 10 H14" stroke="#8fd8ae" stroke-width="3.5"/><path d="M12 20 L20 13 H40 V34 L32 42 H12 Z M12 20 H32 V42 M32 20 L40 13" fill="none" stroke="#8fd8ae" stroke-width="2"/><path d="M48 50 L40 50 L48 42 Z" fill="#8a8a8a"/></svg><div class="t" style="left:132.0px;top:179.3px;font-size:23px;color:#f2f2f2;text-shadow:0 0 3px #000,1px 1px 1px #000;">User Perspective</div><div class="t" style="left:134.0px;top:215.3px;font-size:23px;color:#f2f2f2;text-shadow:0 0 3px #000,1px 1px 1px #000;">(1) Collection | Cube</div><svg class="a" style="left:0;top:0" width="3840" height="400" viewBox="0 0 3840 400"><line x1="3068.7" y1="257" x2="3068.7" y2="199" stroke="#2f86e0" stroke-width="2.8"/><line x1="3068.7" y1="257" x2="3127.5" y2="245.5" stroke="#6fa21f" stroke-width="2.8"/><line x1="3068.7" y1="257" x2="3094.9" y2="283" stroke="#d6384f" stroke-width="2.8"/><circle cx="3043.1" cy="230.8" r="13.5" fill="rgba(120,50,60,0.25)" stroke="#b0384f" stroke-width="2"/><circle cx="3010.5" cy="268.3" r="15.3" fill="#566a32" stroke="#7ac41d" stroke-width="2.2"/><circle cx="3068.7" cy="314.2" r="14.5" fill="#3d4d60" stroke="#3479d0" stroke-width="2.2"/><circle cx="3068.7" cy="199.2" r="16.6" fill="#3589e6"/><circle cx="3127.5" cy="245.5" r="15.8" fill="#6ea521"/><circle cx="3094.9" cy="283" r="17" fill="#f5355a"/><text x="3068.7" y="207" font-size="21" font-weight="bold" fill="#0f2b4d" text-anchor="middle" font-family="Liberation Sans">Z</text><text x="3127.5" y="253.5" font-size="21" font-weight="bold" fill="#1f2d08" text-anchor="middle" font-family="Liberation Sans">Y</text><text x="3094.9" y="291" font-size="21" font-weight="bold" fill="#4d0a14" text-anchor="middle" font-family="Liberation Sans">X</text></svg><div class="a" style="left:3096.3px;top:338.8px;width:55.4px;height:55.4px;border-radius:50%;background:rgba(40,40,40,0.55)"></div><div class="a" style="left:3096.3px;top:398.6px;width:55.4px;height:55.4px;border-radius:50%;background:rgba(40,40,40,0.55)"></div><div class="a" style="left:3096.3px;top:458.8px;width:55.4px;height:55.4px;border-radius:50%;background:rgba(40,40,40,0.55)"></div><div class="a" style="left:3096.3px;top:519.1px;width:55.4px;height:55.4px;border-radius:50%;background:rgba(40,40,40,0.55)"></div><svg class="a" style="left:3104.0px;top:346.0px;" width="40" height="40" viewBox="0 0 40 40"><circle cx="22" cy="14" r="10" fill="#dcdcdc"/><path d="M17 14 H27 M22 9 V19" stroke="#282828" stroke-width="2"/><path d="M15 21 L6 30" stroke="#dcdcdc" stroke-width="3.5" stroke-linecap="round"/></svg><svg class="a" style="left:3104.0px;top:406.0px;" width="40" height="40" viewBox="0 0 40 40"><path d="M14 30 L6 20 Q8 17 11 19 L14 22 V6 Q16 4 18 6 V18 V4 Q20 2 22 4 V18 V5 Q24 3 26 5 V19 L28 9 Q30 7 32 9 L30 26 Q26 34 19 34 Z" fill="#dcdcdc"/></svg><svg class="a" style="left:3104.0px;top:466.0px;" width="40" height="40" viewBox="0 0 40 40"><circle cx="13" cy="12" r="6" fill="none" stroke="#dcdcdc" stroke-width="2"/><circle cx="24" cy="12" r="6" fill="none" stroke="#dcdcdc" stroke-width="2"/><path d="M8 18 H29" stroke="#dcdcdc" stroke-width="2"/><rect x="11" y="22" width="12" height="9" fill="none" stroke="#dcdcdc" stroke-width="2"/><path d="M6 24 V29 M6 26.5 H11 M26 26.5 L33 22 V31 Z" fill="none" stroke="#dcdcdc" stroke-width="2"/></svg><svg class="a" style="left:3104.0px;top:527.0px;" width="40" height="40" viewBox="0 0 40 40"><path d="M12 7 H28 L33 33 H7 Z M9.5 20 H30.5 M17 7 L15 33 M23 7 L25 33" fill="none" stroke="#dcdcdc" stroke-width="2.2"/></svg><div class="a" style="left:3151.4px;top:200.5px;width:16.6px;height:35.3px;background:rgba(40,40,40,0.6);border-radius:6px 0 0 6px;"></div><svg class="a" style="left:3152.0px;top:208.0px;" width="16" height="20" viewBox="0 0 16 20"><path d="M12 3 L5 10 L12 17" fill="none" stroke="#9a9a9a" stroke-width="2"/></svg><div class="a" style="left:3px;top:53px;width:3166px;height:1769px;border:1.8px solid #5a5a5a;border-radius:12px;box-sizing:border-box"></div><div class="a" style="left:0.0px;top:0.0px;width:3840.0px;height:53.0px;background:#181818;"></div><svg class="a" style="left:10.0px;top:5.0px;" width="60" height="40" viewBox="0 0 60 40"><g stroke="#dcdcdc" stroke-linecap="round" fill="none"><line x1="27" y1="9" x2="36" y2="15.5" stroke-width="3.2"/><line x1="15.5" y1="15.5" x2="28" y2="16" stroke-width="3"/><line x1="11.5" y1="28.2" x2="22" y2="19.5" stroke-width="3.3"/></g><circle cx="30.9" cy="23.3" r="11" fill="#dcdcdc"/><circle cx="30.9" cy="22.8" r="5.4" fill="none" stroke="#181818" stroke-width="2"/></svg><div class="t" style="left:72.0px;top:16.8px;font-size:23px;color:#e6e6e6;">File</div><div class="t" style="left:137.5px;top:16.8px;font-size:23px;color:#e6e6e6;">Edit</div><div class="t" style="left:205.5px;top:16.8px;font-size:23px;color:#e6e6e6;">Render</div><div class="t" style="left:307.0px;top:16.8px;font-size:23px;color:#e6e6e6;">Window</div><div class="t" style="left:419.0px;top:16.8px;font-size:23px;color:#e6e6e6;">Help</div><div class="a" style="left:515.0px;top:12.0px;width:105.0px;height:41.0px;background:#2c2c2c;border-radius:8px 8px 0 0;"></div><div class="t" style="left:533.0px;top:22.8px;font-size:23px;color:#e6e6e6;">Layout</div><div class="a" style="left:622.5px;top:11.0px;width:132.8px;height:42.0px;background:#1e1e1e;border-radius:8px 8px 0 0;"></div><div class="t" style="left:642.0px;top:22.8px;font-size:23px;color:#ababab;">Modeling</div><div class="a" style="left:756.7px;top:11.0px;width:134.1px;height:42.0px;background:#1e1e1e;border-radius:8px 8px 0 0;"></div><div class="t" style="left:776.0px;top:22.8px;font-size:23px;color:#ababab;">Sculpting</div><div class="a" style="left:893.0px;top:11.0px;width:143.0px;height:42.0px;background:#1e1e1e;border-radius:8px 8px 0 0;"></div><div class="t" style="left:912.6px;top:22.8px;font-size:23px;color:#ababab;">UV Editing</div><div class="a" style="left:1038.0px;top:11.0px;width:152.0px;height:42.0px;background:#1e1e1e;border-radius:8px 8px 0 0;"></div><div class="t" style="left:1058.5px;top:22.8px;font-size:23px;color:#ababab;">Texture Paint</div><div class="a" style="left:1192.0px;top:11.0px;width:144.0px;height:42.0px;background:#1e1e1e;border-radius:8px 8px 0 0;"></div><div class="t" style="left:1233.0px;top:22.8px;font-size:23px;color:#ababab;">Shading</div><div class="a" style="left:1337.8px;top:11.0px;width:139.8px;height:42.0px;background:#1e1e1e;border-radius:8px 8px 0 0;"></div><div class="t" style="left:1356.4px;top:22.8px;font-size:23px;color:#ababab;">Animation</div><div class="a" style="left:1479.5px;top:11.0px;width:141.5px;height:42.0px;background:#1e1e1e;border-radius:8px 8px 0 0;"></div><div class="t" style="left:1498.0px;top:22.8px;font-size:23px;color:#ababab;">Rendering</div><div class="a" style="left:1623.0px;top:11.0px;width:167.0px;height:42.0px;background:#1e1e1e;border-radius:8px 8px 0 0;"></div><div class="t" style="left:1641.4px;top:22.8px;font-size:23px;color:#ababab;">Compositing</div><div class="a" style="left:1792.0px;top:11.0px;width:205.8px;height:42.0px;background:#1e1e1e;border-radius:8px 8px 0 0;"></div><div class="t" style="left:1808.7px;top:22.8px;font-size:23px;color:#ababab;">Geometry Nodes</div><div class="a" style="left:1999.7px;top:11.0px;width:126.1px;height:42.0px;background:#1e1e1e;border-radius:8px 8px 0 0;"></div><div class="t" style="left:2019.0px;top:22.8px;font-size:23px;color:#ababab;">Scripting</div><div class="a" style="left:2127.8px;top:11.0px;width:40.8px;height:42.0px;background:#1e1e1e;border-radius:8px 8px 0 0;"></div><svg class="a" style="left:2137.0px;top:20.0px;" width="24" height="24" viewBox="0 0 24 24"><path d="M12 3V21M3 12H21" stroke="#b0b0b0" stroke-width="2"/></svg><div class="a" style="left:3165.5px;top:6.7px;width:342.9px;height:38.8px;background:#2a2a2a;border-radius:8px;border:1px solid #303030;box-sizing:border-box;"></div><div class="a" style="left:3228.0px;top:7.5px;width:200.0px;height:37.0px;background:#1d1d1d;"></div><div class="a" style="left:3428.0px;top:7.5px;width:39.0px;height:37.0px;background:#545454;"></div><div class="t" style="left:3243.0px;top:18.3px;font-size:23px;color:#e6e6e6;">Scene</div><svg class="a" style="left:3172.0px;top:10.0px;" width="34" height="32" viewBox="0 0 34 32"><path d="M10 5 L4 22 Q6 27 12 27 L16 22 Z" fill="#dcdcdc"/><circle cx="21" cy="10" r="4" fill="#dcdcdc"/><circle cx="17" cy="24" r="6" fill="#2a2a2a" stroke="#dcdcdc" stroke-width="2"/><circle cx="17" cy="24" r="2.5" fill="none" stroke="#dcdcdc" stroke-width="1.2"/></svg><svg class="a" style="left:3205.0px;top:16.0px;" width="20" height="20" viewBox="0 0 20 20"><path d="M3 7 L10 13 L17 7" fill="none" stroke="#d0d0d0" stroke-width="2"/></svg><svg class="a" style="left:3390.0px;top:11.0px;" width="32" height="32" viewBox="0 0 32 32"><path d="M20 4 L28 12 L23 14 L17 20 L17 24 L8 15 L12 15 L18 9 Z M12 20 L4 28" fill="none" stroke="#8c8c8c" stroke-width="2"/></svg><svg class="a" style="left:3432.0px;top:12.0px;" width="32" height="30" viewBox="0 0 32 30"><path d="M9 8 H5 V26 H20 V22 M9 4 H20 L26 10 V22 H9 Z" fill="none" stroke="#d8d8d8" stroke-width="2.2"/></svg><svg class="a" style="left:3474.0px;top:12.0px;" width="28" height="28" viewBox="0 0 28 28"><path d="M6 6 L22 22 M22 6 L6 22" stroke="#6a6a6a" stroke-width="2"/></svg><div class="a" style="left:3519.0px;top:6.7px;width:303.4px;height:38.8px;background:#2a2a2a;border-radius:8px;border:1px solid #303030;box-sizing:border-box;"></div><div class="a" style="left:3582.0px;top:7.5px;width:160.0px;height:37.0px;background:#1d1d1d;"></div><div class="a" style="left:3742.0px;top:7.5px;width:39.0px;height:37.0px;background:#545454;"></div><div class="t" style="left:3597.0px;top:18.3px;font-size:23px;color:#e6e6e6;">ViewLayer</div><svg class="a" style="left:3527.0px;top:11.0px;" width="32" height="30" viewBox="0 0 32 30"><path d="M4 10 V27 H20 M7 7 V24 H23 M10 4 H27 V21 H10 Z" fill="none" stroke="#dcdcdc" stroke-width="2"/><path d="M12 19 L17 11 L21 16 L25 19 Z" fill="#dcdcdc"/><circle cx="22" cy="8" r="2" fill="#dcdcdc"/></svg><svg class="a" style="left:3557.0px;top:16.0px;" width="20" height="20" viewBox="0 0 20 20"><path d="M3 7 L10 13 L17 7" fill="none" stroke="#d0d0d0" stroke-width="2"/></svg><svg class="a" style="left:3746.0px;top:12.0px;" width="32" height="30" viewBox="0 0 32 30"><path d="M9 8 H5 V26 H20 V22 M9 4 H20 L26 10 V22 H9 Z" fill="none" stroke="#d8d8d8" stroke-width="2.2"/></svg><svg class="a" style="left:3788.0px;top:12.0px;" width="28" height="28" viewBox="0 0 28 28"><path d="M6 6 L22 22 M22 6 L6 22" stroke="#6a6a6a" stroke-width="2"/></svg><div class="a" style="left:3px;top:1831px;width:3166px;height:144px;border-radius:9px;overflow:hidden;background:#2b2b2b"></div><div class="a" style="left:3.0px;top:1831.0px;width:3166.0px;height:51.0px;background:#303030;border-radius:12px 12px 0 0;"></div><div class="a" style="left:3.0px;top:1882.0px;width:3166.0px;height:45.0px;background:#1d1d1d;"></div><div class="a" style="left:3.0px;top:1927.0px;width:3166.0px;height:48.0px;background:#232323;border-radius:0 0 12px 12px;"></div><div class="a" style="left:117.3px;top:1927.0px;width:2933.7px;height:48.0px;background:#2e2e2e;"></div><svg class="a" style="left:0;top:0" width="3840" height="2019"><rect x="46.8" y="1927" width="1.6" height="48" fill="#262626"/><rect x="105.5" y="1927" width="2.0" height="48" fill="#141414"/><rect x="164.6" y="1927" width="1.6" height="48" fill="#262626"/><rect x="223.3" y="1927" width="2.0" height="48" fill="#141414"/><rect x="282.4" y="1927" width="1.6" height="48" fill="#262626"/><rect x="341.1" y="1927" width="2.0" height="48" fill="#141414"/><rect x="400.1" y="1927" width="1.6" height="48" fill="#262626"/><rect x="458.8" y="1927" width="2.0" height="48" fill="#141414"/><rect x="517.9" y="1927" width="1.6" height="48" fill="#262626"/><rect x="576.6" y="1927" width="2.0" height="48" fill="#141414"/><rect x="635.7" y="1927" width="1.6" height="48" fill="#262626"/><rect x="694.4" y="1927" width="2.0" height="48" fill="#141414"/><rect x="753.5" y="1927" width="1.6" height="48" fill="#262626"/><rect x="812.2" y="1927" width="2.0" height="48" fill="#141414"/><rect x="871.3" y="1927" width="1.6" height="48" fill="#262626"/><rect x="930.0" y="1927" width="2.0" height="48" fill="#141414"/><rect x="989.1" y="1927" width="1.6" height="48" fill="#262626"/><rect x="1047.7" y="1927" width="2.0" height="48" fill="#141414"/><rect x="1106.8" y="1927" width="1.6" height="48" fill="#262626"/><rect x="1165.5" y="1927" width="2.0" height="48" fill="#141414"/><rect x="1224.6" y="1927" width="1.6" height="48" fill="#262626"/><rect x="1283.3" y="1927" width="2.0" height="48" fill="#141414"/><rect x="1342.4" y="1927" width="1.6" height="48" fill="#262626"/><rect x="1401.1" y="1927" width="2.0" height="48" fill="#141414"/><rect x="1460.2" y="1927" width="1.6" height="48" fill="#262626"/><rect x="1518.9" y="1927" width="2.0" height="48" fill="#141414"/><rect x="1578.0" y="1927" width="1.6" height="48" fill="#262626"/><rect x="1636.6" y="1927" width="2.0" height="48" fill="#141414"/><rect x="1695.7" y="1927" width="1.6" height="48" fill="#262626"/><rect x="1754.4" y="1927" width="2.0" height="48" fill="#141414"/><rect x="1813.5" y="1927" width="1.6" height="48" fill="#262626"/><rect x="1872.2" y="1927" width="2.0" height="48" fill="#141414"/><rect x="1931.3" y="1927" width="1.6" height="48" fill="#262626"/><rect x="1990.0" y="1927" width="2.0" height="48" fill="#141414"/><rect x="2049.1" y="1927" width="1.6" height="48" fill="#262626"/><rect x="2107.8" y="1927" width="2.0" height="48" fill="#141414"/><rect x="2166.8" y="1927" width="1.6" height="48" fill="#262626"/><rect x="2225.5" y="1927" width="2.0" height="48" fill="#141414"/><rect x="2284.6" y="1927" width="1.6" height="48" fill="#262626"/><rect x="2343.3" y="1927" width="2.0" height="48" fill="#141414"/><rect x="2402.4" y="1927" width="1.6" height="48" fill="#262626"/><rect x="2461.1" y="1927" width="2.0" height="48" fill="#141414"/><rect x="2520.2" y="1927" width="1.6" height="48" fill="#262626"/><rect x="2578.9" y="1927" width="2.0" height="48" fill="#141414"/><rect x="2638.0" y="1927" width="1.6" height="48" fill="#262626"/><rect x="2696.7" y="1927" width="2.0" height="48" fill="#141414"/><rect x="2755.8" y="1927" width="1.6" height="48" fill="#262626"/><rect x="2814.4" y="1927" width="2.0" height="48" fill="#141414"/><rect x="2873.5" y="1927" width="1.6" height="48" fill="#262626"/><rect x="2932.2" y="1927" width="2.0" height="48" fill="#141414"/><rect x="2991.3" y="1927" width="1.6" height="48" fill="#262626"/><rect x="3050.0" y="1927" width="2.0" height="48" fill="#141414"/><rect x="3109.1" y="1927" width="1.6" height="48" fill="#262626"/><rect x="14" y="1964" width="3136" height="5.5" rx="2.7" fill="#4a4a4a" opacity="0.45"/><circle cx="22" cy="1966.7" r="2.5" fill="#1a1a1a"/><circle cx="3146" cy="1966.7" r="2.5" fill="#1a1a1a"/></svg><div class="t" style="left:-76.7px;width:600px;top:1895.3px;font-size:23px;color:#b4b4b4;text-align:center;">10</div><div class="t" style="left:41.1px;width:600px;top:1895.3px;font-size:23px;color:#b4b4b4;text-align:center;">20</div><div class="t" style="left:158.8px;width:600px;top:1895.3px;font-size:23px;color:#b4b4b4;text-align:center;">30</div><div class="t" style="left:276.6px;width:600px;top:1895.3px;font-size:23px;color:#b4b4b4;text-align:center;">40</div><div class="t" style="left:394.4px;width:600px;top:1895.3px;font-size:23px;color:#b4b4b4;text-align:center;">50</div><div class="t" style="left:512.2px;width:600px;top:1895.3px;font-size:23px;color:#b4b4b4;text-align:center;">60</div><div class="t" style="left:630.0px;width:600px;top:1895.3px;font-size:23px;color:#b4b4b4;text-align:center;">70</div><div class="t" style="left:747.7px;width:600px;top:1895.3px;font-size:23px;color:#b4b4b4;text-align:center;">80</div><div class="t" style="left:865.5px;width:600px;top:1895.3px;font-size:23px;color:#b4b4b4;text-align:center;">90</div><div class="t" style="left:983.3px;width:600px;top:1895.3px;font-size:23px;color:#b4b4b4;text-align:center;">100</div><div class="t" style="left:1101.1px;width:600px;top:1895.3px;font-size:23px;color:#b4b4b4;text-align:center;">110</div><div class="t" style="left:1218.9px;width:600px;top:1895.3px;font-size:23px;color:#b4b4b4;text-align:center;">120</div><div class="t" style="left:1336.6px;width:600px;top:1895.3px;font-size:23px;color:#b4b4b4;text-align:center;">130</div><div class="t" style="left:1454.4px;width:600px;top:1895.3px;font-size:23px;color:#b4b4b4;text-align:center;">140</div><div class="t" style="left:1572.2px;width:600px;top:1895.3px;font-size:23px;color:#b4b4b4;text-align:center;">150</div><div class="t" style="left:1690.0px;width:600px;top:1895.3px;font-size:23px;color:#b4b4b4;text-align:center;">160</div><div class="t" style="left:1807.8px;width:600px;top:1895.3px;font-size:23px;color:#b4b4b4;text-align:center;">170</div><div class="t" style="left:1925.5px;width:600px;top:1895.3px;font-size:23px;color:#b4b4b4;text-align:center;">180</div><div class="t" style="left:2043.3px;width:600px;top:1895.3px;font-size:23px;color:#b4b4b4;text-align:center;">190</div><div class="t" style="left:2161.1px;width:600px;top:1895.3px;font-size:23px;color:#b4b4b4;text-align:center;">200</div><div class="t" style="left:2278.9px;width:600px;top:1895.3px;font-size:23px;color:#b4b4b4;text-align:center;">210</div><div class="t" style="left:2396.7px;width:600px;top:1895.3px;font-size:23px;color:#b4b4b4;text-align:center;">220</div><div class="t" style="left:2514.4px;width:600px;top:1895.3px;font-size:23px;color:#b4b4b4;text-align:center;">230</div><div class="t" style="left:2632.2px;width:600px;top:1895.3px;font-size:23px;color:#b4b4b4;text-align:center;">240</div><div class="t" style="left:2750.0px;width:600px;top:1895.3px;font-size:23px;color:#b4b4b4;text-align:center;">250</div><div class="a" style="left:116.5px;top:1921.0px;width:3.6px;height:54.0px;background:#4772b3;"></div><div class="a" style="left:94.4px;top:1888.2px;width:47.2px;height:33.0px;background:#4772b3;border-radius:7px;"></div><div class="t" style="left:-182.0px;width:600px;top:1895.3px;font-size:23px;color:#ffffff;text-align:center;">1</div><svg class="a" style="left:2.0px;top:1932.0px;" width="14" height="22" viewBox="0 0 14 22"><path d="M3 4 L10 11 L3 18" fill="none" stroke="#7a7a7a" stroke-width="2"/></svg><svg class="a" style="left:3150.0px;top:1938.0px;" width="14" height="22" viewBox="0 0 14 22"><path d="M11 4 L4 11 L11 18" fill="none" stroke="#7a7a7a" stroke-width="2"/></svg><div class="a" style="left:15.7px;top:1836.1px;width:64.5px;height:40.1px;background:#3a3a3a;border-radius:9px;"></div><div class="a" style="left:16.9px;top:1837.3px;width:62.1px;height:37.7px;background:#282828;border-radius:8px;"></div><svg class="a" style="left:24.0px;top:1840.0px;" width="34" height="32" viewBox="0 0 34 32"><circle cx="16" cy="16" r="13" fill="#e6e6e6"/><path d="M18 8 L12 16 L18 24" fill="none" stroke="#282828" stroke-width="3.2"/></svg><svg class="a" style="left:56.0px;top:1847.0px;" width="20" height="20" viewBox="0 0 20 20"><path d="M3 7 L10 13 L17 7" fill="none" stroke="#d0d0d0" stroke-width="2"/></svg><div class="a" style="left:90.2px;top:1836.1px;width:261.8px;height:40.1px;background:#3a3a3a;border-radius:9px;"></div><div class="a" style="left:91.4px;top:1837.3px;width:259.4px;height:37.7px;background:#282828;border-radius:8px;"></div><div class="a" style="left:232.0px;top:1837.3px;width:1.2px;height:37.7px;background:#3a3a3a;"></div><div class="t" style="left:106.8px;top:1846.3px;font-size:23px;color:#e6e6e6;">Playback</div><svg class="a" style="left:209.0px;top:1847.0px;" width="20" height="20" viewBox="0 0 20 20"><path d="M3 7 L10 13 L17 7" fill="none" stroke="#d0d0d0" stroke-width="2"/></svg><div class="t" style="left:247.2px;top:1846.3px;font-size:23px;color:#e6e6e6;">Keying</div><svg class="a" style="left:328.0px;top:1847.0px;" width="20" height="20" viewBox="0 0 20 20"><path d="M3 7 L10 13 L17 7" fill="none" stroke="#d0d0d0" stroke-width="2"/></svg><div class="t" style="left:371.4px;top:1846.3px;font-size:23px;color:#e6e6e6;">View</div><div class="t" style="left:450.2px;top:1846.3px;font-size:23px;color:#e6e6e6;">Marker</div><div class="a" style="left:1398.7px;top:1836.3px;width:78.4px;height:39.3px;background:#3a3a3a;border-radius:9px;"></div><div class="a" style="left:1399.9px;top:1837.5px;width:76.0px;height:36.9px;background:#2c2c2c;border-radius:8px;"></div><div class="a" style="left:1399.9px;top:1837.5px;width:36.1px;height:36.9px;background:#545454;border-radius:8px 0 0 8px;"></div><svg class="a" style="left:1406.0px;top:1843.0px;" width="26" height="26" viewBox="0 0 26 26"><circle cx="13" cy="13" r="9.5" fill="none" stroke="#c8c8c8" stroke-width="2"/></svg><svg class="a" style="left:1446.0px;top:1847.0px;" width="20" height="20" viewBox="0 0 20 20"><path d="M3 7 L10 13 L17 7" fill="none" stroke="#6a6a6a" stroke-width="2"/></svg><div class="a" style="left:1488.7px;top:1836.3px;width:238.4px;height:39.3px;background:#3a3a3a;border-radius:9px;"></div><div class="a" style="left:1489.9px;top:1837.5px;width:236.0px;height:36.9px;background:#545454;border-radius:8px;"></div><div class="a" style="left:1528.4px;top:1837.5px;width:1.6px;height:36.9px;background:#3d3d3d;"></div><div class="a" style="left:1567.8px;top:1837.5px;width:1.6px;height:36.9px;background:#3d3d3d;"></div><div class="a" style="left:1607.1px;top:1837.5px;width:1.6px;height:36.9px;background:#3d3d3d;"></div><div class="a" style="left:1646.4px;top:1837.5px;width:1.6px;height:36.9px;background:#3d3d3d;"></div><div class="a" style="left:1685.8px;top:1837.5px;width:1.6px;height:36.9px;background:#3d3d3d;"></div><svg class="a" style="left:1491.4px;top:1838.0px;" width="36" height="36" viewBox="0 0 36 36"><rect x="9" y="8" width="4" height="20" fill="#e6e6e6"/><path d="M27 9 V27 L15 18 Z" fill="#e6e6e6"/></svg><svg class="a" style="left:1530.7px;top:1838.0px;" width="36" height="36" viewBox="0 0 36 36"><path d="M11 9 L18 18 L11 27 L4 18 Z M30 9 V27 L22 18 Z" fill="#e6e6e6"/></svg><svg class="a" style="left:1570.1px;top:1838.0px;" width="36" height="36" viewBox="0 0 36 36"><path d="M28 6 V30 L8 18 Z" fill="#e6e6e6" stroke="#e6e6e6" stroke-width="1.5" stroke-linejoin="round"/></svg><svg class="a" style="left:1609.4px;top:1838.0px;" width="36" height="36" viewBox="0 0 36 36"><path d="M10 6 V30 L30 18 Z" fill="#e6e6e6" stroke="#e6e6e6" stroke-width="1.5" stroke-linejoin="round"/></svg><svg class="a" style="left:1648.7px;top:1838.0px;" width="36" height="36" viewBox="0 0 36 36"><path d="M8 9 V27 L16 18 Z M26 9 L33 18 L26 27 L19 18 Z" fill="#e6e6e6"/></svg><svg class="a" style="left:1688.1px;top:1838.0px;" width="36" height="36" viewBox="0 0 36 36"><path d="M9 9 V27 L21 18 Z" fill="#e6e6e6"/><rect x="23" y="8" width="4" height="20" fill="#e6e6e6"/></svg><div class="a" style="left:2606.8px;top:1836.3px;width:150.3px;height:40.1px;background:#3a3a3a;border-radius:9px;"></div><div class="a" style="left:2608.0px;top:1837.5px;width:147.9px;height:37.7px;background:#545454;border-radius:8px;"></div><div class="t" style="left:2382.0px;width:600px;top:1845.9px;font-size:23px;color:#e6e6e6;text-align:center;">1</div><div class="a" style="left:2767.0px;top:1836.3px;width:386.8px;height:40.1px;background:#3a3a3a;border-radius:9px;"></div><div class="a" style="left:2768.2px;top:1837.5px;width:384.4px;height:37.7px;background:#545454;border-radius:8px;"></div><div class="a" style="left:2805.0px;top:1837.5px;width:1.5px;height:37.7px;background:#3d3d3d;"></div><div class="a" style="left:2981.5px;top:1837.5px;width:1.5px;height:37.7px;background:#3d3d3d;"></div><svg class="a" style="left:2770.0px;top:1839.0px;" width="34" height="34" viewBox="0 0 34 34"><circle cx="17" cy="19" r="11" fill="none" stroke="#e0e0e0" stroke-width="2"/><path d="M13 4 H21 M17 4 V8 M17 13 V20 H22 M27 9 L30 6" fill="none" stroke="#e0e0e0" stroke-width="2"/></svg><div class="t" style="left:2838.6px;top:1845.9px;font-size:23px;color:#e6e6e6;">Start</div><div class="t" style="right:882.0px;top:1845.9px;font-size:23px;color:#e6e6e6;text-align:right;">1</div><div class="t" style="left:3015.6px;top:1845.9px;font-size:23px;color:#e6e6e6;">End</div><div class="t" style="right:713.0px;top:1845.9px;font-size:23px;color:#e6e6e6;text-align:right;">250</div><div class="a" style="left:3px;top:1831px;width:3166px;height:144px;border:1.5px solid #3a3a3a;border-radius:12px;box-sizing:border-box"></div><div class="a" style="left:0.0px;top:1975.0px;width:3840.0px;height:44.0px;background:#181818;"></div><svg class="a" style="left:19.0px;top:1979.0px;" width="26" height="34" viewBox="0 0 26 34"><rect x="2" y="2" width="20" height="29" rx="6" fill="none" stroke="#8a8a8a" stroke-width="2"/><path d="M3 14 V8 Q3 3 9 3 H11 V14 Z" fill="#8a8a8a"/></svg><div class="t" style="left:48.4px;top:1986.0px;font-size:23px;color:#a4a4a4;">Select</div><svg class="a" style="left:129.0px;top:1979.0px;" width="26" height="34" viewBox="0 0 26 34"><rect x="2" y="2" width="20" height="29" rx="6" fill="none" stroke="#8a8a8a" stroke-width="2"/><rect x="9" y="5" width="6" height="11" rx="3" fill="#8a8a8a"/></svg><div class="t" style="left:158.3px;top:1986.0px;font-size:23px;color:#a4a4a4;">Rotate View</div><svg class="a" style="left:296.0px;top:1979.0px;" width="26" height="34" viewBox="0 0 26 34"><rect x="2" y="2" width="20" height="29" rx="6" fill="none" stroke="#8a8a8a" stroke-width="2"/><path d="M13 3 H15 Q21 3 21 8 V14 H13 Z" fill="#8a8a8a"/></svg><div class="t" style="left:325.5px;top:1986.0px;font-size:23px;color:#a4a4a4;">Options</div><svg class="a" style="left:3706.0px;top:1980.0px;" width="34" height="34" viewBox="0 0 34 34"><circle cx="16" cy="17" r="12" fill="none" stroke="#6a6a6a" stroke-width="2"/><ellipse cx="16" cy="17" rx="5" ry="12" fill="none" stroke="#6a6a6a" stroke-width="2"/><path d="M4 13 H28 M4 21 H28" stroke="#6a6a6a" stroke-width="2"/><path d="M4 3 L30 31" stroke="#6a6a6a" stroke-width="2.5"/></svg><div class="a" style="left:3753.0px;top:1983.0px;width:2.5px;height:25.0px;background:#9a9a9a;"></div><div class="t" style="left:3763.0px;top:1986.3px;font-size:23px;color:#a0a0a0;">4.5.3</div><div class="a" style="left:3178px;top:54px;width:662px;height:612px;border-radius:12px;overflow:hidden;background:#282828"><div class="a" style="left:0;top:92px;width:662px;height:40px;background:#2a2a2a"></div><div class="a" style="left:0;top:172px;width:662px;height:40px;background:#2a2a2a"></div><div class="a" style="left:0;top:252px;width:662px;height:40px;background:#2a2a2a"></div><div class="a" style="left:0;top:332px;width:662px;height:40px;background:#2a2a2a"></div><div class="a" style="left:0;top:412px;width:662px;height:40px;background:#2a2a2a"></div><div class="a" style="left:0;top:492px;width:662px;height:40px;background:#2a2a2a"></div><div class="a" style="left:0;top:572px;width:662px;height:40px;background:#2a2a2a"></div></div><div class="a" style="left:3178px;top:54px;width:662px;height:612px;border:1.5px solid #3a3a3a;border-radius:12px;box-sizing:border-box"></div><div class="a" style="left:3193.5px;top:57.5px;width:64.7px;height:40.9px;background:#3a3a3a;border-radius:9px;"></div><div class="a" style="left:3194.7px;top:58.7px;width:62.3px;height:38.5px;background:#282828;border-radius:8px;"></div><svg class="a" style="left:3200.0px;top:62.0px;" width="32" height="32" viewBox="0 0 32 32"><rect x="3" y="3" width="10" height="5" fill="#e6e6e6"/><path d="M6 8 V26 H12 M6 17 H12" fill="none" stroke="#9a9a9a" stroke-width="2"/><rect x="13" y="14" width="14" height="6" rx="1" fill="#e6e6e6"/><rect x="13" y="22" width="14" height="6" rx="1" fill="#e6e6e6"/></svg><svg class="a" style="left:3234.5px;top:69.0px;" width="20" height="20" viewBox="0 0 20 20"><path d="M3 7 L10 13 L17 7" fill="none" stroke="#d0d0d0" stroke-width="2"/></svg><div class="a" style="left:3267.6px;top:57.5px;width:64.8px;height:40.9px;background:#3a3a3a;border-radius:9px;"></div><div class="a" style="left:3268.8px;top:58.7px;width:62.4px;height:38.5px;background:#282828;border-radius:8px;"></div><svg class="a" style="left:3275.0px;top:62.0px;" width="32" height="32" viewBox="0 0 32 32"><path d="M4 10 V27 H20 M7 7 V24 H23 M10 4 H27 V21 H10 Z" fill="none" stroke="#dcdcdc" stroke-width="2"/><path d="M12 19 L17 11 L21 16 L25 19 Z" fill="#dcdcdc"/><circle cx="22" cy="8" r="2" fill="#dcdcdc"/></svg><svg class="a" style="left:3308.5px;top:69.0px;" width="20" height="20" viewBox="0 0 20 20"><path d="M3 7 L10 13 L17 7" fill="none" stroke="#d0d0d0" stroke-width="2"/></svg><div class="a" style="left:3370.4px;top:57.5px;width:231.2px;height:40.9px;background:#3a3a3a;border-radius:9px;"></div><div class="a" style="left:3371.6px;top:58.7px;width:228.8px;height:38.5px;background:#1d1d1d;border-radius:8px;"></div><svg class="a" style="left:3379.0px;top:62.0px;" width="34" height="34" viewBox="0 0 34 34"><circle cx="20" cy="13" r="8" fill="none" stroke="#dcdcdc" stroke-width="2"/><path d="M14 19 L5 28" stroke="#dcdcdc" stroke-width="2"/></svg><div class="t" style="left:3423.6px;top:68.6px;font-size:23px;color:#787878;">Search</div><div class="a" style="left:3709.2px;top:57.5px;width:65.4px;height:40.9px;background:#3a3a3a;border-radius:9px;"></div><div class="a" style="left:3710.4px;top:58.7px;width:63.0px;height:38.5px;background:#282828;border-radius:8px;"></div><svg class="a" style="left:3716.0px;top:62.0px;" width="34" height="34" viewBox="0 0 34 34"><path d="M4 5 H30 L20 17 V30 L15 26 V17 Z" fill="none" stroke="#e6e6e6" stroke-width="2.2" stroke-linejoin="round"/></svg><svg class="a" style="left:3750.0px;top:69.0px;" width="20" height="20" viewBox="0 0 20 20"><path d="M3 7 L10 13 L17 7" fill="none" stroke="#d0d0d0" stroke-width="2"/></svg><div class="a" style="left:3783.1px;top:57.5px;width:40.9px;height:40.9px;background:#3a3a3a;border-radius:9px;"></div><div class="a" style="left:3784.3px;top:58.7px;width:38.5px;height:38.5px;background:#545454;border-radius:8px;"></div><svg class="a" style="left:3787.0px;top:61.0px;" width="34" height="34" viewBox="0 0 34 34"><path d="M6 10 H14 V14 M6 10 V14 H14 M6 14 V30 H26 V22" fill="none" stroke="#c8c8c8" stroke-width="2"/><rect x="12" y="20" width="6" height="3" fill="#c8c8c8"/><circle cx="24" cy="10" r="7" fill="#e6e6e6"/><path d="M24 6 V14 M20 10 H28" stroke="#545454" stroke-width="2"/></svg><svg class="a" style="left:3222.0px;top:111.0px;" width="32" height="30" viewBox="0 0 32 30"><rect x="1" y="1" width="29" height="7" fill="#e0e0e0"/><rect x="3" y="10" width="25" height="17" fill="#e0e0e0"/><rect x="12" y="13" width="7" height="3" rx="1.5" fill="#282828"/></svg><div class="t" style="left:3266.9px;top:117.9px;font-size:23px;color:#e6e6e6;">Scene Collection</div><svg class="a" style="left:3226.0px;top:158.0px;" width="24" height="20" viewBox="0 0 24 20"><path d="M3 5 L11 13 L19 5" fill="none" stroke="#c8c8c8" stroke-width="2"/></svg><div class="a" style="left:3258.0px;top:148.8px;width:39.3px;height:34.4px;background:#3a3a3a;border-radius:7px;border:1.5px solid #5a5a5a;box-sizing:border-box;"></div><svg class="a" style="left:3262.0px;top:152.0px;" width="32" height="28" viewBox="0 0 32 28"><rect x="3" y="2" width="26" height="6" fill="#e0e0e0"/><rect x="5" y="10" width="22" height="15" fill="#e0e0e0"/><rect x="13" y="13" width="6" height="3" rx="1.5" fill="#3a3a3a"/></svg><div class="t" style="left:3306.5px;top:158.9px;font-size:23px;color:#f0f0f0;">Collection</div><svg class="a" style="left:3708.0px;top:154.0px;" width="24" height="24" viewBox="0 0 24 24"><rect x="1" y="1" width="20" height="20" rx="2" fill="#e6e6e6"/><path d="M5 11 L9 15 L17 6" fill="none" stroke="#282828" stroke-width="2.8"/></svg><svg class="a" style="left:3743.0px;top:154.0px;" width="32" height="26" viewBox="0 0 32 26"><path d="M3.5 13 Q16 0.5 28.5 13 Q16 25.5 3.5 13 Z" fill="none" stroke="#e6e6e6" stroke-width="3.4" stroke-linejoin="round"/><circle cx="16" cy="13" r="4.6" fill="#e6e6e6"/><circle cx="16" cy="13" r="2" fill="#282828"/></svg><svg class="a" style="left:3783.0px;top:153.0px;" width="32" height="28" viewBox="0 0 32 28"><path d="M4 8 H10 L12 4 H20 L22 8 H28 V24 H4 Z" fill="#e6e6e6"/><circle cx="16" cy="15" r="6" fill="#282828"/><circle cx="16" cy="15" r="3.5" fill="#e6e6e6"/></svg><svg class="a" style="left:3743.0px;top:194.0px;" width="32" height="26" viewBox="0 0 32 26"><path d="M3.5 13 Q16 0.5 28.5 13 Q16 25.5 3.5 13 Z" fill="none" stroke="#e6e6e6" stroke-width="3.4" stroke-linejoin="round"/><circle cx="16" cy="13" r="4.6" fill="#e6e6e6"/><circle cx="16" cy="13" r="2" fill="#282828"/></svg><svg class="a" style="left:3783.0px;top:193.0px;" width="32" height="28" viewBox="0 0 32 28"><path d="M4 8 H10 L12 4 H20 L22 8 H28 V24 H4 Z" fill="#e6e6e6"/><circle cx="16" cy="15" r="6" fill="#282828"/><circle cx="16" cy="15" r="3.5" fill="#e6e6e6"/></svg><svg class="a" style="left:3743.0px;top:234.0px;" width="32" height="26" viewBox="0 0 32 26"><path d="M3.5 13 Q16 0.5 28.5 13 Q16 25.5 3.5 13 Z" fill="none" stroke="#e6e6e6" stroke-width="3.4" stroke-linejoin="round"/><circle cx="16" cy="13" r="4.6" fill="#e6e6e6"/><circle cx="16" cy="13" r="2" fill="#282828"/></svg><svg class="a" style="left:3783.0px;top:233.0px;" width="32" height="28" viewBox="0 0 32 28"><path d="M4 8 H10 L12 4 H20 L22 8 H28 V24 H4 Z" fill="#e6e6e6"/><circle cx="16" cy="15" r="6" fill="#282828"/><circle cx="16" cy="15" r="3.5" fill="#e6e6e6"/></svg><svg class="a" style="left:3743.0px;top:274.0px;" width="32" height="26" viewBox="0 0 32 26"><path d="M3.5 13 Q16 0.5 28.5 13 Q16 25.5 3.5 13 Z" fill="none" stroke="#e6e6e6" stroke-width="3.4" stroke-linejoin="round"/><circle cx="16" cy="13" r="4.6" fill="#e6e6e6"/><circle cx="16" cy="13" r="2" fill="#282828"/></svg><svg class="a" style="left:3783.0px;top:273.0px;" width="32" height="28" viewBox="0 0 32 28"><path d="M4 8 H10 L12 4 H20 L22 8 H28 V24 H4 Z" fill="#e6e6e6"/><circle cx="16" cy="15" r="6" fill="#282828"/><circle cx="16" cy="15" r="3.5" fill="#e6e6e6"/></svg><div class="a" style="left:3235.0px;top:196.4px;width:2.0px;height:99.0px;background:#5a5a5a;"></div><svg class="a" style="left:3268.0px;top:196.0px;" width="20" height="22" viewBox="0 0 20 22"><path d="M6 3 L14 11 L6 19" fill="none" stroke="#c8c8c8" stroke-width="2"/></svg><svg class="a" style="left:3268.0px;top:236.0px;" width="20" height="22" viewBox="0 0 20 22"><path d="M6 3 L14 11 L6 19" fill="none" stroke="#c8c8c8" stroke-width="2"/></svg><svg class="a" style="left:3268.0px;top:276.0px;" width="20" height="22" viewBox="0 0 20 22"><path d="M6 3 L14 11 L6 19" fill="none" stroke="#c8c8c8" stroke-width="2"/></svg><svg class="a" style="left:3301.0px;top:188.0px;" width="34" height="34" viewBox="0 0 34 34"><circle cx="9" cy="9" r="6.5" fill="#d38a4a"/><circle cx="21" cy="8" r="7.5" fill="#d38a4a"/><circle cx="9" cy="10" r="2" fill="#282828"/><circle cx="21" cy="9" r="2" fill="#282828"/><rect x="7" y="18" width="16" height="11" rx="2" fill="#d38a4a"/><path d="M3 20 V27 M24 23 L30 19 V29 Z" fill="#d38a4a" stroke="#d38a4a" stroke-width="2"/></svg><div class="t" style="left:3346.6px;top:197.1px;font-size:23px;color:#dedede;">Camera</div><div class="a" style="left:3465.7px;top:188.4px;width:38.8px;height:34.9px;background:#4a4a4a;border-radius:7px;border:1.5px solid #5a5a5a;box-sizing:border-box;"></div><svg class="a" style="left:3469.0px;top:190.0px;" width="32" height="32" viewBox="0 0 32 32"><circle cx="10" cy="10" r="6" fill="none" stroke="#20c0a0" stroke-width="2"/><circle cx="21" cy="10" r="7" fill="none" stroke="#20c0a0" stroke-width="2"/><path d="M4 17 H28" stroke="#20c0a0" stroke-width="2"/><rect x="9" y="19" width="12" height="9" fill="none" stroke="#20c0a0" stroke-width="2"/><path d="M4 21 V27 M23 23.5 L29 20 V27 Z" fill="none" stroke="#20c0a0" stroke-width="2"/></svg><div class="a" style="left:3298.6px;top:228.6px;width:38.8px;height:34.3px;background:#4a4a4a;border-radius:7px;border:1.5px solid #5a5a5a;box-sizing:border-box;"></div><svg class="a" style="left:3303.0px;top:232.0px;" width="30" height="28" viewBox="0 0 30 28"><path d="M3 3 H27 L15 26 Z" fill="#d38a4a"/><path d="M10 8 H20 L15 18 Z" fill="#4a4a4a"/></svg><div class="t" style="left:3346.6px;top:238.1px;font-size:23px;color:#ffaf2b;">Cube</div><svg class="a" style="left:3444.0px;top:230.0px;" width="32" height="32" viewBox="0 0 32 32"><path d="M6 6 H26 L16 26 Z" fill="none" stroke="#20c0a0" stroke-width="2"/><rect x="3" y="3" width="6" height="6" fill="#282828" stroke="#20c0a0" stroke-width="2"/><rect x="23" y="3" width="6" height="6" fill="#282828" stroke="#20c0a0" stroke-width="2"/><rect x="13" y="23" width="6" height="6" fill="#282828" stroke="#20c0a0" stroke-width="2"/></svg><svg class="a" style="left:3304.0px;top:270.0px;" width="30" height="34" viewBox="0 0 30 34"><circle cx="13" cy="11" r="10" fill="#d38a4a"/><rect x="8" y="18" width="10" height="5" fill="#d38a4a"/><path d="M9 25 H17 M10 28 H16" stroke="#d38a4a" stroke-width="2"/><path d="M9 10 V15 M17 10 V15 M8 11 H18" stroke="#282828" stroke-width="1.6"/></svg><div class="t" style="left:3346.6px;top:277.7px;font-size:23px;color:#dedede;">Light</div><svg class="a" style="left:3440.0px;top:268.0px;" width="32" height="36" viewBox="0 0 32 36"><circle cx="16" cy="15" r="12" fill="none" stroke="#20c0a0" stroke-width="2"/><circle cx="16" cy="14" r="2.5" fill="none" stroke="#20c0a0" stroke-width="1.6"/><path d="M16 17 V21 M16 24 V27 M16 30 V33" stroke="#20c0a0" stroke-width="1.8"/></svg><div class="a" style="left:3178.0px;top:674.0px;width:662.0px;height:1301.0px;background:#303030;border-radius:12px;"></div><div class="a" style="left:3178.0px;top:726.0px;width:58.0px;height:1249.0px;background:#1d1d1d;border-radius:0 0 0 12px;"></div><div class="a" style="left:3184.0px;top:725.0px;width:52.0px;height:73.0px;background:#1d1d1d;border-radius:0 0 8px 8px;box-shadow:0 2px 2px rgba(0,0,0,0.3);"></div><div class="a" style="left:3184.0px;top:801.6px;width:52.0px;height:292.4px;background:#1d1d1d;border-radius:0 0 8px 8px;box-shadow:0 2px 2px rgba(0,0,0,0.3);"></div><div class="a" style="left:3184.0px;top:1097.0px;width:52.0px;height:68.0px;background:#1d1d1d;border-radius:0 0 8px 8px;box-shadow:0 2px 2px rgba(0,0,0,0.3);"></div><div class="a" style="left:3184.0px;top:1168.0px;width:52.0px;height:406.6px;background:#1d1d1d;border-radius:0 0 8px 8px;box-shadow:0 2px 2px rgba(0,0,0,0.3);"></div><div class="a" style="left:3184.0px;top:1184.4px;width:56.0px;height:51.0px;background:#303030;border-radius:8px 0 0 8px;"></div><div class="a" style="left:3194.4px;top:678.8px;width:63.9px;height:40.3px;background:#3a3a3a;border-radius:9px;"></div><div class="a" style="left:3195.6px;top:680.0px;width:61.5px;height:37.9px;background:#282828;border-radius:8px;"></div><svg class="a" style="left:0;top:0" width="3840" height="2019"><rect x="3204.8" y="686" width="26.1" height="10.2" rx="5.1" fill="none" stroke="#e6e6e6" stroke-width="1.8"/><path d="M3215.8 685.1 H3209.9 A6 6 0 0 0 3209.9 697.1 H3215.8 Z" fill="#e6e6e6"/><rect x="3204.8" y="702" width="26.1" height="10.2" rx="5.1" fill="none" stroke="#e6e6e6" stroke-width="1.8"/><path d="M3221.8 701.1 H3209.9 A6 6 0 0 0 3209.9 713.1 H3221.8 Z" fill="#e6e6e6"/></svg><svg class="a" style="left:3234.5px;top:690.0px;" width="20" height="20" viewBox="0 0 20 20"><path d="M3 7 L10 13 L17 7" fill="none" stroke="#d0d0d0" stroke-width="2"/></svg><div class="a" style="left:3396.4px;top:678.8px;width:229.4px;height:40.3px;background:#3a3a3a;border-radius:9px;"></div><div class="a" style="left:3397.6px;top:680.0px;width:227.0px;height:37.9px;background:#1d1d1d;border-radius:8px;"></div><svg class="a" style="left:3404.0px;top:683.0px;" width="34" height="34" viewBox="0 0 34 34"><circle cx="20" cy="13" r="8" fill="none" stroke="#dcdcdc" stroke-width="2"/><path d="M14 19 L5 28" stroke="#dcdcdc" stroke-width="2"/></svg><div class="t" style="left:3447.8px;top:689.6px;font-size:23px;color:#787878;">Search</div><div class="a" style="left:3783.8px;top:678.8px;width:40.0px;height:40.3px;background:#3a3a3a;border-radius:9px;"></div><div class="a" style="left:3785.0px;top:680.0px;width:37.6px;height:37.9px;background:#282828;border-radius:8px;"></div><svg class="a" style="left:3794.0px;top:690.0px;" width="20" height="20" viewBox="0 0 20 20"><path d="M3 7 L10 13 L17 7" fill="none" stroke="#d0d0d0" stroke-width="2"/></svg><svg class="a" style="left:3192.0px;top:753.3px;" width="32" height="32" viewBox="0 0 32 32"><g fill="#acacac"><rect x="6.9" y="2.5" width="2.2" height="12" rx="1"/><rect x="3" y="16.6" width="10" height="2" rx="0.5"/><rect x="5.4" y="18" width="5.2" height="4"/><circle cx="8" cy="25.2" r="5"/><path d="M17 7.7 A7 7 0 0 1 21 1.6 V7.5 A2.9 2.9 0 0 0 26.8 7.5 V1.6 A7 7 0 0 1 26.9 13.8 V28 A2.95 2.95 0 0 1 21 28 V13.8 A7 7 0 0 1 17 7.7 Z"/></g><circle cx="23.95" cy="27.7" r="1.2" fill="#1d1d1d"/></svg><svg class="a" style="left:3192.0px;top:826.4px;" width="32" height="32" viewBox="0 0 32 32"><path d="M3 9 H9 L11 5 H19 L21 9 H27 V27 H3 Z" fill="#a8a8a8"/><path d="M7 14 H19 M7 18 H19 M7 22 H19" stroke="#1d1d1d" stroke-width="2"/><circle cx="24" cy="14" r="1.5" fill="#1d1d1d"/><circle cx="24" cy="21" r="1.5" fill="#1d1d1d"/></svg><svg class="a" style="left:3192.0px;top:880.7px;" width="32" height="32" viewBox="0 0 32 32"><rect x="3" y="3" width="26" height="10" rx="3" fill="#a8a8a8"/><rect x="7" y="11" width="18" height="16" fill="#a8a8a8"/><path d="M10 25 L16 17 L22 25 Z" fill="#1d1d1d"/><circle cx="20" cy="15" r="2" fill="#1d1d1d"/></svg><svg class="a" style="left:3192.0px;top:938.5px;" width="32" height="32" viewBox="0 0 32 32"><path d="M3 10 V28 H20 M6 7 V25 H23 M9 4 H27 V22 H9 Z" fill="none" stroke="#a8a8a8" stroke-width="2"/><path d="M11 21 L17 11 L21 16 L25 21 Z" fill="#a8a8a8"/><circle cx="22" cy="8" r="2" fill="#a8a8a8"/></svg><svg class="a" style="left:3192.0px;top:992.9px;" width="32" height="32" viewBox="0 0 32 32"><path d="M10 4 L3 20 Q4 25 10 25 L14 20 Z" fill="#a8a8a8"/><circle cx="23" cy="7" r="4" fill="#a8a8a8"/><circle cx="18" cy="21" r="7" fill="#1d1d1d" stroke="#a8a8a8" stroke-width="2"/></svg><svg class="a" style="left:3192.0px;top:1049.0px;" width="32" height="32" viewBox="0 0 32 32"><circle cx="17" cy="16.7" r="12.2" fill="none" stroke="#b85a65" stroke-width="2.2"/><path d="M6.05 11.96 L13.43 5.75 Q13.14 8.41 16.69 9.3 L18.75 10.78 Q17.28 12.55 14.32 14.32 L11.37 16.39 L9 18.75 Z M12.55 19.35 L22 19.64 L22.89 22 L19.35 27.03 L14.91 27.03 L13.73 22.6 Z" fill="#b85a65"/><path d="M3.2 30.3 L7.6 26 M26.4 7.3 L30.7 3" stroke="#b85a65" stroke-width="2.2"/></svg><svg class="a" style="left:3192.0px;top:1122.0px;" width="32" height="32" viewBox="0 0 32 32"><rect x="4" y="4" width="24" height="6" fill="none" stroke="#e0e0e0" stroke-width="2"/><rect x="5" y="11" width="22" height="16" fill="none" stroke="#e0e0e0" stroke-width="2"/><rect x="13" y="15" width="6" height="3" rx="1.5" fill="#e0e0e0"/></svg><svg class="a" style="left:3192.0px;top:1193.8px;" width="32" height="32" viewBox="0 0 32 32"><path d="M2 8 V2 H8 M24 2 H30 V8 M30 24 V30 H24 M8 30 H2 V24" fill="none" stroke="#c98a4e" stroke-width="2"/><rect x="7" y="7" width="18" height="18" fill="#e89f55"/></svg><svg class="a" style="left:3192.0px;top:1249.7px;" width="32" height="32" viewBox="0 0 32 32"><path d="M6 27 L17 16 A7 7 0 0 1 26 6 L22 11 L25 13 L28 9 A7 7 0 0 1 19 19 L8 29 Z" fill="#5b86d8"/></svg><svg class="a" style="left:3192.0px;top:1306.6px;" width="32" height="32" viewBox="0 0 32 32"><circle cx="8" cy="8" r="5" fill="#6a8fe0"/><circle cx="26" cy="8" r="3" fill="#6a8fe0"/><circle cx="26" cy="26" r="4" fill="#6a8fe0"/><circle cx="8" cy="26" r="3" fill="#6a8fe0"/><path d="M13 8 H23 M11 11 L23 23 M8 13 V23" stroke="#6a8fe0" stroke-width="2"/></svg><svg class="a" style="left:3192.0px;top:1361.9px;" width="32" height="32" viewBox="0 0 32 32"><circle cx="14" cy="18" r="6" fill="#6a8fe0"/><path d="M22 27 A12 12 0 1 1 21 7" fill="none" stroke="#6a8fe0" stroke-width="2"/><circle cx="25" cy="7" r="4" fill="#6a8fe0"/></svg><svg class="a" style="left:3192.0px;top:1418.8px;" width="32" height="32" viewBox="0 0 32 32"><path d="M26 4 Q31 8 26 16 L15 28 Q5 30 4 20 Q5 12 14 12 L22 5 Q24 3 26 4 Z" fill="none" stroke="#6a8fe0" stroke-width="2"/><circle cx="12" cy="20" r="5" fill="none" stroke="#6a8fe0" stroke-width="2.5"/><circle cx="24" cy="8" r="1.8" fill="#6a8fe0"/></svg><svg class="a" style="left:3192.0px;top:1474.0px;" width="32" height="32" viewBox="0 0 32 32"><path d="M6 6 H26 L16 26 Z" fill="none" stroke="#1fbf90" stroke-width="2"/><rect x="3" y="3" width="6" height="6" fill="#1d1d1d" stroke="#1fbf90" stroke-width="2"/><rect x="23" y="3" width="6" height="6" fill="#1d1d1d" stroke="#1fbf90" stroke-width="2"/><rect x="13" y="23" width="6" height="6" fill="#1d1d1d" stroke="#1fbf90" stroke-width="2"/></svg><svg class="a" style="left:3192.0px;top:1529.4px;" width="32" height="32" viewBox="0 0 32 32"><circle cx="17" cy="16.6" r="12.6" fill="none" stroke="#b85a65" stroke-width="2"/><path d="M17 3.6 A13 13 0 0 1 29.8 16.2 Q23.4 20.45 17 20.4 Z M17 20.4 Q10.6 20.35 4.2 16 A13 13 0 0 0 17 29.6 Z" fill="#b85a65"/></svg><svg class="a" style="left:3255.0px;top:746.0px;" width="32" height="32" viewBox="0 0 32 32"><path d="M2 8 V2 H8 M24 2 H30 V8 M30 24 V30 H24 M8 30 H2 V24" fill="none" stroke="#bdbdbd" stroke-width="2"/><rect x="7" y="7" width="18" height="18" fill="#e0e0e0"/></svg><div class="t" style="left:3304.7px;top:752.2px;font-size:23px;color:#e6e6e6;">Cube</div><svg class="a" style="left:3788.0px;top:745.0px;" width="34" height="34" viewBox="0 0 34 34"><path d="M20 4 L28 12 L23 14 L17 20 L17 24 L8 15 L12 15 L18 9 Z M12 20 L4 28" fill="none" stroke="#9a9a9a" stroke-width="2"/></svg><div class="a" style="left:3252.8px;top:814.3px;width:571.4px;height:39.4px;background:#3a3a3a;border-radius:9px;"></div><div class="a" style="left:3254.0px;top:815.5px;width:569.0px;height:37.0px;background:#1d1d1d;border-radius:8px;"></div><div class="a" style="left:3254.0px;top:815.5px;width:61.0px;height:37.0px;background:#282828;border-radius:8px 0 0 8px;"></div><svg class="a" style="left:3259.0px;top:818.0px;" width="32" height="32" viewBox="0 0 32 32"><path d="M2 8 V2 H8 M24 2 H30 V8 M30 24 V30 H24 M8 30 H2 V24" fill="none" stroke="#bdbdbd" stroke-width="2"/><rect x="7" y="7" width="18" height="18" fill="#e0e0e0"/></svg><svg class="a" style="left:3292.0px;top:824.5px;" width="20" height="20" viewBox="0 0 20 20"><path d="M3 7 L10 13 L17 7" fill="none" stroke="#d0d0d0" stroke-width="2"/></svg><div class="t" style="left:3330.3px;top:824.3px;font-size:23px;color:#e6e6e6;">Cube</div><div class="a" style="left:3830.0px;top:730.0px;width:3.5px;height:1216.0px;background:#3a3a3a;border-radius:2px;"></div><div class="a" style="left:3252.0px;top:874.0px;width:571.5px;height:561.5px;background:#3d3d3d;border-radius:9px;"></div><svg class="a" style="left:3266.0px;top:892.0px;" width="24" height="18" viewBox="0 0 24 18"><path d="M3 4 L11 12 L19 4" fill="none" stroke="#cfcfcf" stroke-width="2"/></svg><div class="t" style="left:3297.0px;top:890.1px;font-size:23px;color:#e6e6e6;">Transform</div><svg class="a" style="left:3783.0px;top:894.0px;" width="26" height="14" viewBox="0 0 26 14"><rect x="1" y="1" width="2.4" height="2.4" fill="#8a8a8a"/><rect x="1" y="9" width="2.4" height="2.4" fill="#8a8a8a"/><rect x="7" y="1" width="2.4" height="2.4" fill="#8a8a8a"/><rect x="7" y="9" width="2.4" height="2.4" fill="#8a8a8a"/><rect x="13" y="1" width="2.4" height="2.4" fill="#8a8a8a"/><rect x="13" y="9" width="2.4" height="2.4" fill="#8a8a8a"/><rect x="19" y="1" width="2.4" height="2.4" fill="#8a8a8a"/><rect x="19" y="9" width="2.4" height="2.4" fill="#8a8a8a"/></svg><div class="a" style="left:3478.8px;top:941.0px;width:247.3px;height:38.0px;background:#545454;border-radius:8px 8px 0 0;"></div><div class="t" style="right:382.2px;top:950.8px;font-size:23px;color:#e6e6e6;text-align:right;">Location X</div><div class="t" style="left:3302.5px;width:600px;top:950.8px;font-size:23px;color:#e6e6e6;text-align:center;">0 m</div><svg class="a" style="left:3730.0px;top:942.0px;" width="32" height="36" viewBox="0 0 32 36"><path d="M5 16 V11 A7 7 0 0 1 19 11" fill="none" stroke="#b4b4b4" stroke-width="2"/><rect x="12" y="15" width="16" height="14" fill="none" stroke="#b4b4b4" stroke-width="2"/><rect x="19" y="20" width="2" height="3" fill="#b4b4b4"/></svg><div class="a" style="left:3782.9px;top:955.0px;width:10px;height:10px;border-radius:50%;background:#e6e6e6"></div><div class="a" style="left:3478.8px;top:980.5px;width:247.3px;height:38.0px;background:#545454;border-radius:0;"></div><div class="t" style="right:382.2px;top:990.3px;font-size:23px;color:#e6e6e6;text-align:right;">Y</div><div class="t" style="left:3302.5px;width:600px;top:990.3px;font-size:23px;color:#e6e6e6;text-align:center;">0 m</div><svg class="a" style="left:3730.0px;top:981.5px;" width="32" height="36" viewBox="0 0 32 36"><path d="M5 16 V11 A7 7 0 0 1 19 11" fill="none" stroke="#b4b4b4" stroke-width="2"/><rect x="12" y="15" width="16" height="14" fill="none" stroke="#b4b4b4" stroke-width="2"/><rect x="19" y="20" width="2" height="3" fill="#b4b4b4"/></svg><div class="a" style="left:3782.9px;top:994.5px;width:10px;height:10px;border-radius:50%;background:#e6e6e6"></div><div class="a" style="left:3478.8px;top:1020.0px;width:247.3px;height:38.0px;background:#545454;border-radius:0 0 8px 8px;box-shadow:0 2px 1px rgba(0,0,0,0.25);"></div><div class="t" style="right:382.2px;top:1029.8px;font-size:23px;color:#e6e6e6;text-align:right;">Z</div><div class="t" style="left:3302.5px;width:600px;top:1029.8px;font-size:23px;color:#e6e6e6;text-align:center;">0 m</div><svg class="a" style="left:3730.0px;top:1021.0px;" width="32" height="36" viewBox="0 0 32 36"><path d="M5 16 V11 A7 7 0 0 1 19 11" fill="none" stroke="#b4b4b4" stroke-width="2"/><rect x="12" y="15" width="16" height="14" fill="none" stroke="#b4b4b4" stroke-width="2"/><rect x="19" y="20" width="2" height="3" fill="#b4b4b4"/></svg><div class="a" style="left:3782.9px;top:1034.0px;width:10px;height:10px;border-radius:50%;background:#e6e6e6"></div><div class="a" style="left:3478.8px;top:1071.0px;width:247.3px;height:37.0px;background:#545454;border-radius:8px 8px 0 0;"></div><div class="t" style="right:382.2px;top:1080.3px;font-size:23px;color:#e6e6e6;text-align:right;">Rotation X</div><div class="t" style="left:3302.5px;width:600px;top:1080.3px;font-size:23px;color:#e6e6e6;text-align:center;">0°</div><svg class="a" style="left:3730.0px;top:1071.5px;" width="32" height="36" viewBox="0 0 32 36"><path d="M5 16 V11 A7 7 0 0 1 19 11" fill="none" stroke="#b4b4b4" stroke-width="2"/><rect x="12" y="15" width="16" height="14" fill="none" stroke="#b4b4b4" stroke-width="2"/><rect x="19" y="20" width="2" height="3" fill="#b4b4b4"/></svg><div class="a" style="left:3782.9px;top:1084.5px;width:10px;height:10px;border-radius:50%;background:#e6e6e6"></div><div class="a" style="left:3478.8px;top:1110.0px;width:247.3px;height:38.0px;background:#545454;border-radius:0;"></div><div class="t" style="right:382.2px;top:1119.8px;font-size:23px;color:#e6e6e6;text-align:right;">Y</div><div class="t" style="left:3302.5px;width:600px;top:1119.8px;font-size:23px;color:#e6e6e6;text-align:center;">0°</div><svg class="a" style="left:3730.0px;top:1111.0px;" width="32" height="36" viewBox="0 0 32 36"><path d="M5 16 V11 A7 7 0 0 1 19 11" fill="none" stroke="#b4b4b4" stroke-width="2"/><rect x="12" y="15" width="16" height="14" fill="none" stroke="#b4b4b4" stroke-width="2"/><rect x="19" y="20" width="2" height="3" fill="#b4b4b4"/></svg><div class="a" style="left:3782.9px;top:1124.0px;width:10px;height:10px;border-radius:50%;background:#e6e6e6"></div><div class="a" style="left:3478.8px;top:1150.0px;width:247.3px;height:38.0px;background:#545454;border-radius:0 0 8px 8px;box-shadow:0 2px 1px rgba(0,0,0,0.25);"></div><div class="t" style="right:382.2px;top:1159.8px;font-size:23px;color:#e6e6e6;text-align:right;">Z</div><div class="t" style="left:3302.5px;width:600px;top:1159.8px;font-size:23px;color:#e6e6e6;text-align:center;">0°</div><svg class="a" style="left:3730.0px;top:1151.0px;" width="32" height="36" viewBox="0 0 32 36"><path d="M5 16 V11 A7 7 0 0 1 19 11" fill="none" stroke="#b4b4b4" stroke-width="2"/><rect x="12" y="15" width="16" height="14" fill="none" stroke="#b4b4b4" stroke-width="2"/><rect x="19" y="20" width="2" height="3" fill="#b4b4b4"/></svg><div class="a" style="left:3782.9px;top:1164.0px;width:10px;height:10px;border-radius:50%;background:#e6e6e6"></div><div class="a" style="left:3478.8px;top:1252.3px;width:247.3px;height:35.7px;background:#545454;border-radius:8px 8px 0 0;"></div><div class="t" style="right:382.2px;top:1261.0px;font-size:23px;color:#e6e6e6;text-align:right;">Scale X</div><div class="t" style="left:3302.5px;width:600px;top:1261.0px;font-size:23px;color:#e6e6e6;text-align:center;">1.000</div><svg class="a" style="left:3730.0px;top:1252.2px;" width="32" height="36" viewBox="0 0 32 36"><path d="M5 16 V11 A7 7 0 0 1 19 11" fill="none" stroke="#b4b4b4" stroke-width="2"/><rect x="12" y="15" width="16" height="14" fill="none" stroke="#b4b4b4" stroke-width="2"/><rect x="19" y="20" width="2" height="3" fill="#b4b4b4"/></svg><div class="a" style="left:3782.9px;top:1265.2px;width:10px;height:10px;border-radius:50%;background:#e6e6e6"></div><div class="a" style="left:3478.8px;top:1290.0px;width:247.3px;height:38.0px;background:#545454;border-radius:0;"></div><div class="t" style="right:382.2px;top:1299.8px;font-size:23px;color:#e6e6e6;text-align:right;">Y</div><div class="t" style="left:3302.5px;width:600px;top:1299.8px;font-size:23px;color:#e6e6e6;text-align:center;">1.000</div><svg class="a" style="left:3730.0px;top:1291.0px;" width="32" height="36" viewBox="0 0 32 36"><path d="M5 16 V11 A7 7 0 0 1 19 11" fill="none" stroke="#b4b4b4" stroke-width="2"/><rect x="12" y="15" width="16" height="14" fill="none" stroke="#b4b4b4" stroke-width="2"/><rect x="19" y="20" width="2" height="3" fill="#b4b4b4"/></svg><div class="a" style="left:3782.9px;top:1304.0px;width:10px;height:10px;border-radius:50%;background:#e6e6e6"></div><div class="a" style="left:3478.8px;top:1330.0px;width:247.3px;height:38.0px;background:#545454;border-radius:0 0 8px 8px;box-shadow:0 2px 1px rgba(0,0,0,0.25);"></div><div class="t" style="right:382.2px;top:1339.8px;font-size:23px;color:#e6e6e6;text-align:right;">Z</div><div class="t" style="left:3302.5px;width:600px;top:1339.8px;font-size:23px;color:#e6e6e6;text-align:center;">1.000</div><svg class="a" style="left:3730.0px;top:1331.0px;" width="32" height="36" viewBox="0 0 32 36"><path d="M5 16 V11 A7 7 0 0 1 19 11" fill="none" stroke="#b4b4b4" stroke-width="2"/><rect x="12" y="15" width="16" height="14" fill="none" stroke="#b4b4b4" stroke-width="2"/><rect x="19" y="20" width="2" height="3" fill="#b4b4b4"/></svg><div class="a" style="left:3782.9px;top:1344.0px;width:10px;height:10px;border-radius:50%;background:#e6e6e6"></div><div class="a" style="left:3477.8px;top:1201.1px;width:249.4px;height:38.3px;background:#3a3a3a;border-radius:9px;"></div><div class="a" style="left:3479.0px;top:1202.3px;width:247.0px;height:35.9px;background:#282828;border-radius:8px;"></div><div class="t" style="right:382.2px;top:1211.0px;font-size:23px;color:#e6e6e6;text-align:right;">Mode</div><div class="t" style="left:3493.0px;top:1211.0px;font-size:23px;color:#e6e6e6;">XYZ Euler</div><svg class="a" style="left:3704.0px;top:1211.0px;" width="20" height="20" viewBox="0 0 20 20"><path d="M3 7 L10 13 L17 7" fill="none" stroke="#d0d0d0" stroke-width="2"/></svg><div class="a" style="left:3782.9px;top:1215.2px;width:10px;height:10px;border-radius:50%;background:#e6e6e6"></div><svg class="a" style="left:3297.0px;top:1401.0px;" width="18" height="22" viewBox="0 0 18 22"><path d="M5 3 L13 11 L5 19" fill="none" stroke="#cfcfcf" stroke-width="2"/></svg><div class="t" style="left:3324.0px;top:1401.3px;font-size:23px;color:#e6e6e6;">Delta Transform</div><div class="a" style="left:3178px;top:674px;width:662px;height:1301px;border:1.5px solid #3a3a3a;border-radius:12px;box-sizing:border-box"></div><div class="a" style="left:3252.0px;top:1440.5px;width:571.5px;height:49.5px;background:#3d3d3d;border-radius:8px;"></div><svg class="a" style="left:3268.0px;top:1454.5px;" width="18" height="22" viewBox="0 0 18 22"><path d="M5 3 L13 11 L5 19" fill="none" stroke="#cfcfcf" stroke-width="2"/></svg><div class="t" style="left:3296.6px;top:1456.1px;font-size:23px;color:#e6e6e6;">Relations</div><svg class="a" style="left:3783.0px;top:1458.5px;" width="26" height="14" viewBox="0 0 26 14"><rect x="1" y="1" width="2.4" height="2.4" fill="#8a8a8a"/><rect x="1" y="9" width="2.4" height="2.4" fill="#8a8a8a"/><rect x="7" y="1" width="2.4" height="2.4" fill="#8a8a8a"/><rect x="7" y="9" width="2.4" height="2.4" fill="#8a8a8a"/><rect x="13" y="1" width="2.4" height="2.4" fill="#8a8a8a"/><rect x="13" y="9" width="2.4" height="2.4" fill="#8a8a8a"/><rect x="19" y="1" width="2.4" height="2.4" fill="#8a8a8a"/><rect x="19" y="9" width="2.4" height="2.4" fill="#8a8a8a"/></svg><div class="a" style="left:3252.0px;top:1494.5px;width:571.5px;height:49.5px;background:#3d3d3d;border-radius:8px;"></div><svg class="a" style="left:3268.0px;top:1508.5px;" width="18" height="22" viewBox="0 0 18 22"><path d="M5 3 L13 11 L5 19" fill="none" stroke="#cfcfcf" stroke-width="2"/></svg><div class="t" style="left:3296.6px;top:1510.1px;font-size:23px;color:#e6e6e6;">Collections</div><svg class="a" style="left:3783.0px;top:1512.5px;" width="26" height="14" viewBox="0 0 26 14"><rect x="1" y="1" width="2.4" height="2.4" fill="#8a8a8a"/><rect x="1" y="9" width="2.4" height="2.4" fill="#8a8a8a"/><rect x="7" y="1" width="2.4" height="2.4" fill="#8a8a8a"/><rect x="7" y="9" width="2.4" height="2.4" fill="#8a8a8a"/><rect x="13" y="1" width="2.4" height="2.4" fill="#8a8a8a"/><rect x="13" y="9" width="2.4" height="2.4" fill="#8a8a8a"/><rect x="19" y="1" width="2.4" height="2.4" fill="#8a8a8a"/><rect x="19" y="9" width="2.4" height="2.4" fill="#8a8a8a"/></svg><div class="a" style="left:3252.0px;top:1548.5px;width:571.5px;height:49.5px;background:#3d3d3d;border-radius:8px;"></div><svg class="a" style="left:3268.0px;top:1562.5px;" width="18" height="22" viewBox="0 0 18 22"><path d="M5 3 L13 11 L5 19" fill="none" stroke="#cfcfcf" stroke-width="2"/></svg><div class="t" style="left:3296.6px;top:1564.1px;font-size:23px;color:#e6e6e6;">Instancing</div><svg class="a" style="left:3783.0px;top:1566.5px;" width="26" height="14" viewBox="0 0 26 14"><rect x="1" y="1" width="2.4" height="2.4" fill="#8a8a8a"/><rect x="1" y="9" width="2.4" height="2.4" fill="#8a8a8a"/><rect x="7" y="1" width="2.4" height="2.4" fill="#8a8a8a"/><rect x="7" y="9" width="2.4" height="2.4" fill="#8a8a8a"/><rect x="13" y="1" width="2.4" height="2.4" fill="#8a8a8a"/><rect x="13" y="9" width="2.4" height="2.4" fill="#8a8a8a"/><rect x="19" y="1" width="2.4" height="2.4" fill="#8a8a8a"/><rect x="19" y="9" width="2.4" height="2.4" fill="#8a8a8a"/></svg><div class="a" style="left:3252.0px;top:1602.5px;width:571.5px;height:49.5px;background:#3d3d3d;border-radius:8px;"></div><svg class="a" style="left:3268.0px;top:1616.5px;" width="18" height="22" viewBox="0 0 18 22"><path d="M5 3 L13 11 L5 19" fill="none" stroke="#cfcfcf" stroke-width="2"/></svg><div class="t" style="left:3296.6px;top:1618.1px;font-size:23px;color:#e6e6e6;">Motion Paths</div><svg class="a" style="left:3783.0px;top:1620.5px;" width="26" height="14" viewBox="0 0 26 14"><rect x="1" y="1" width="2.4" height="2.4" fill="#8a8a8a"/><rect x="1" y="9" width="2.4" height="2.4" fill="#8a8a8a"/><rect x="7" y="1" width="2.4" height="2.4" fill="#8a8a8a"/><rect x="7" y="9" width="2.4" height="2.4" fill="#8a8a8a"/><rect x="13" y="1" width="2.4" height="2.4" fill="#8a8a8a"/><rect x="13" y="9" width="2.4" height="2.4" fill="#8a8a8a"/><rect x="19" y="1" width="2.4" height="2.4" fill="#8a8a8a"/><rect x="19" y="9" width="2.4" height="2.4" fill="#8a8a8a"/></svg><div class="a" style="left:3252.0px;top:1656.5px;width:571.5px;height:49.5px;background:#3d3d3d;border-radius:8px;"></div><svg class="a" style="left:3268.0px;top:1670.5px;" width="18" height="22" viewBox="0 0 18 22"><path d="M5 3 L13 11 L5 19" fill="none" stroke="#cfcfcf" stroke-width="2"/></svg><div class="t" style="left:3296.6px;top:1672.1px;font-size:23px;color:#e6e6e6;">Shading</div><svg class="a" style="left:3783.0px;top:1674.5px;" width="26" height="14" viewBox="0 0 26 14"><rect x="1" y="1" width="2.4" height="2.4" fill="#8a8a8a"/><rect x="1" y="9" width="2.4" height="2.4" fill="#8a8a8a"/><rect x="7" y="1" width="2.4" height="2.4" fill="#8a8a8a"/><rect x="7" y="9" width="2.4" height="2.4" fill="#8a8a8a"/><rect x="13" y="1" width="2.4" height="2.4" fill="#8a8a8a"/><rect x="13" y="9" width="2.4" height="2.4" fill="#8a8a8a"/><rect x="19" y="1" width="2.4" height="2.4" fill="#8a8a8a"/><rect x="19" y="9" width="2.4" height="2.4" fill="#8a8a8a"/></svg><div class="a" style="left:3252.0px;top:1710.5px;width:571.5px;height:49.5px;background:#3d3d3d;border-radius:8px;"></div><svg class="a" style="left:3268.0px;top:1724.5px;" width="18" height="22" viewBox="0 0 18 22"><path d="M5 3 L13 11 L5 19" fill="none" stroke="#cfcfcf" stroke-width="2"/></svg><div class="t" style="left:3296.6px;top:1726.1px;font-size:23px;color:#e6e6e6;">Visibility</div><svg class="a" style="left:3783.0px;top:1728.5px;" width="26" height="14" viewBox="0 0 26 14"><rect x="1" y="1" width="2.4" height="2.4" fill="#8a8a8a"/><rect x="1" y="9" width="2.4" height="2.4" fill="#8a8a8a"/><rect x="7" y="1" width="2.4" height="2.4" fill="#8a8a8a"/><rect x="7" y="9" width="2.4" height="2.4" fill="#8a8a8a"/><rect x="13" y="1" width="2.4" height="2.4" fill="#8a8a8a"/><rect x="13" y="9" width="2.4" height="2.4" fill="#8a8a8a"/><rect x="19" y="1" width="2.4" height="2.4" fill="#8a8a8a"/><rect x="19" y="9" width="2.4" height="2.4" fill="#8a8a8a"/></svg><div class="a" style="left:3252.0px;top:1764.5px;width:571.5px;height:49.5px;background:#3d3d3d;border-radius:8px;"></div><svg class="a" style="left:3268.0px;top:1778.5px;" width="18" height="22" viewBox="0 0 18 22"><path d="M5 3 L13 11 L5 19" fill="none" stroke="#cfcfcf" stroke-width="2"/></svg><div class="t" style="left:3296.6px;top:1780.1px;font-size:23px;color:#e6e6e6;">Viewport Display</div><svg class="a" style="left:3783.0px;top:1782.5px;" width="26" height="14" viewBox="0 0 26 14"><rect x="1" y="1" width="2.4" height="2.4" fill="#8a8a8a"/><rect x="1" y="9" width="2.4" height="2.4" fill="#8a8a8a"/><rect x="7" y="1" width="2.4" height="2.4" fill="#8a8a8a"/><rect x="7" y="9" width="2.4" height="2.4" fill="#8a8a8a"/><rect x="13" y="1" width="2.4" height="2.4" fill="#8a8a8a"/><rect x="13" y="9" width="2.4" height="2.4" fill="#8a8a8a"/><rect x="19" y="1" width="2.4" height="2.4" fill="#8a8a8a"/><rect x="19" y="9" width="2.4" height="2.4" fill="#8a8a8a"/></svg><div class="a" style="left:3252.0px;top:1818.5px;width:571.5px;height:49.5px;background:#3d3d3d;border-radius:8px;"></div><svg class="a" style="left:3268.0px;top:1832.5px;" width="18" height="22" viewBox="0 0 18 22"><path d="M5 3 L13 11 L5 19" fill="none" stroke="#cfcfcf" stroke-width="2"/></svg><div class="t" style="left:3296.6px;top:1834.1px;font-size:23px;color:#e6e6e6;">Line Art</div><svg class="a" style="left:3783.0px;top:1836.5px;" width="26" height="14" viewBox="0 0 26 14"><rect x="1" y="1" width="2.4" height="2.4" fill="#8a8a8a"/><rect x="1" y="9" width="2.4" height="2.4" fill="#8a8a8a"/><rect x="7" y="1" width="2.4" height="2.4" fill="#8a8a8a"/><rect x="7" y="9" width="2.4" height="2.4" fill="#8a8a8a"/><rect x="13" y="1" width="2.4" height="2.4" fill="#8a8a8a"/><rect x="13" y="9" width="2.4" height="2.4" fill="#8a8a8a"/><rect x="19" y="1" width="2.4" height="2.4" fill="#8a8a8a"/><rect x="19" y="9" width="2.4" height="2.4" fill="#8a8a8a"/></svg><div class="a" style="left:3252.0px;top:1872.5px;width:571.5px;height:49.5px;background:#3d3d3d;border-radius:8px;"></div><svg class="a" style="left:3268.0px;top:1886.5px;" width="18" height="22" viewBox="0 0 18 22"><path d="M5 3 L13 11 L5 19" fill="none" stroke="#cfcfcf" stroke-width="2"/></svg><div class="t" style="left:3296.6px;top:1888.1px;font-size:23px;color:#e6e6e6;">Animation</div><svg class="a" style="left:3783.0px;top:1890.5px;" width="26" height="14" viewBox="0 0 26 14"><rect x="1" y="1" width="2.4" height="2.4" fill="#8a8a8a"/><rect x="1" y="9" width="2.4" height="2.4" fill="#8a8a8a"/><rect x="7" y="1" width="2.4" height="2.4" fill="#8a8a8a"/><rect x="7" y="9" width="2.4" height="2.4" fill="#8a8a8a"/><rect x="13" y="1" width="2.4" height="2.4" fill="#8a8a8a"/><rect x="13" y="9" width="2.4" height="2.4" fill="#8a8a8a"/><rect x="19" y="1" width="2.4" height="2.4" fill="#8a8a8a"/><rect x="19" y="9" width="2.4" height="2.4" fill="#8a8a8a"/></svg><div class="a" style="left:3252.0px;top:1926.5px;width:571.5px;height:48.5px;background:#3d3d3d;border-radius:8px 8px 0 0;"></div><svg class="a" style="left:3268.0px;top:1940.5px;" width="18" height="22" viewBox="0 0 18 22"><path d="M5 3 L13 11 L5 19" fill="none" stroke="#cfcfcf" stroke-width="2"/></svg><div class="t" style="left:3296.6px;top:1942.1px;font-size:23px;color:#e6e6e6;">Custom Properties</div><svg class="a" style="left:3783.0px;top:1944.5px;" width="26" height="14" viewBox="0 0 26 14"><rect x="1" y="1" width="2.4" height="2.4" fill="#8a8a8a"/><rect x="1" y="9" width="2.4" height="2.4" fill="#8a8a8a"/><rect x="7" y="1" width="2.4" height="2.4" fill="#8a8a8a"/><rect x="7" y="9" width="2.4" height="2.4" fill="#8a8a8a"/><rect x="13" y="1" width="2.4" height="2.4" fill="#8a8a8a"/><rect x="13" y="9" width="2.4" height="2.4" fill="#8a8a8a"/><rect x="19" y="1" width="2.4" height="2.4" fill="#8a8a8a"/><rect x="19" y="9" width="2.4" height="2.4" fill="#8a8a8a"/></svg></body></html>
